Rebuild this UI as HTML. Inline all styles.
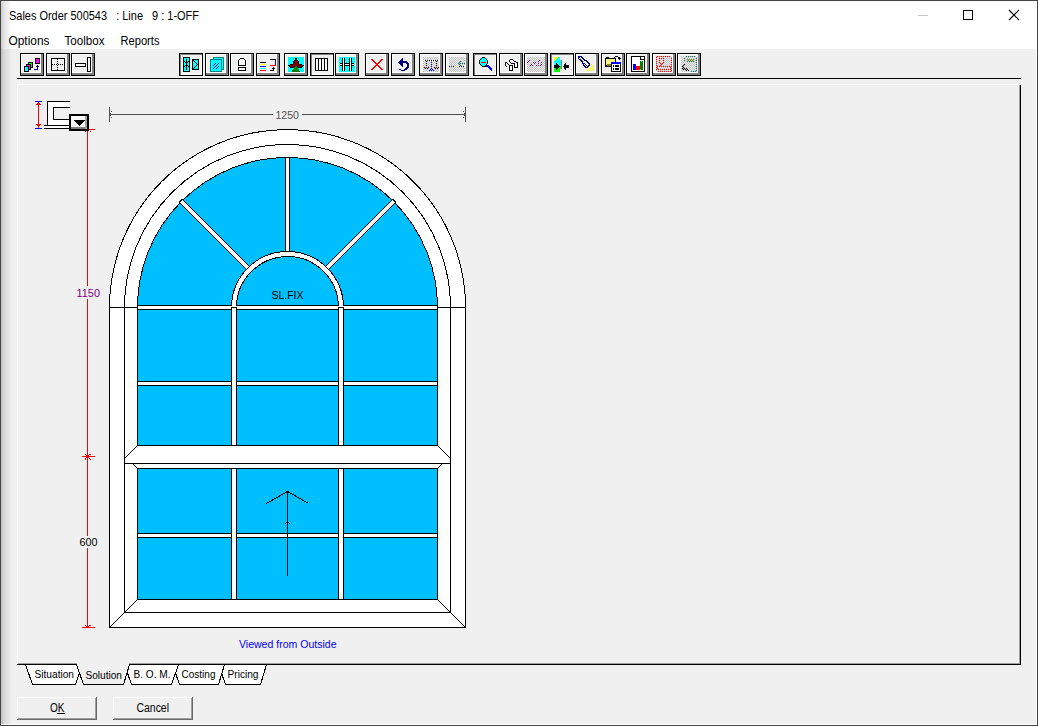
<!DOCTYPE html>
<html><head><meta charset="utf-8"><style>
html,body{margin:0;padding:0;width:1038px;height:726px;overflow:hidden;background:#f0f0f0}
svg{position:absolute;left:0;top:0;font-family:"Liberation Sans",sans-serif}
</style></head><body>
<svg width="1038" height="726" viewBox="0 0 1038 726" shape-rendering="crispEdges">
<rect x="0" y="0" width="1038" height="726" fill="#f0f0f0"/>
<rect x="0" y="0" width="1038" height="49" fill="#ffffff"/>
<defs><linearGradient id="lsh" x1="0" x2="1" y1="0" y2="0"><stop offset="0" stop-color="#000" stop-opacity="0.2"/><stop offset="0.3" stop-color="#000" stop-opacity="0.1"/><stop offset="1" stop-color="#000" stop-opacity="0"/></linearGradient></defs>
<rect x="1" y="0" width="11" height="726" fill="url(#lsh)"/>
<defs><filter id="crisp" x="-10%" y="-30%" width="120%" height="160%"><feComponentTransfer><feFuncA type="discrete" tableValues="0 1 1"/></feComponentTransfer></filter></defs>
<rect x="0" y="0" width="1038" height="1" fill="#444"/>
<rect x="0" y="0" width="1" height="726" fill="#444"/>
<rect x="1037" y="0" width="1" height="726" fill="#444"/>
<rect x="0" y="725" width="1038" height="1" fill="#444"/>
<rect x="1036" y="49" width="1" height="676" fill="#ffffff"/>
<rect x="1" y="724" width="1036" height="1" fill="#ffffff"/>
<text x="9" y="20" font-size="12" fill="#000" text-anchor="start" font-weight="normal" xml:space="preserve" style="white-space:pre" textLength="190" lengthAdjust="spacingAndGlyphs">Sales Order 500543   : Line   9 : 1-OFF</text>
<rect x="918" y="15" width="10" height="1" fill="#c8c8c8"/>
<rect x="963.5" y="10.5" width="9" height="9" fill="none" stroke="#000" stroke-width="1"/>
<g shape-rendering="geometricPrecision"><line x1="1009" y1="10" x2="1019" y2="20" stroke="#000" stroke-width="1.1"/><line x1="1019" y1="10" x2="1009" y2="20" stroke="#000" stroke-width="1.1"/></g>
<text x="8.5" y="45" font-size="12" fill="#000" text-anchor="start" font-weight="normal" xml:space="preserve" style="white-space:pre" textLength="41" lengthAdjust="spacingAndGlyphs">Options</text>
<text x="64.5" y="45" font-size="12" fill="#000" text-anchor="start" font-weight="normal" xml:space="preserve" style="white-space:pre" textLength="40" lengthAdjust="spacingAndGlyphs">Toolbox</text>
<text x="120.5" y="45" font-size="12" fill="#000" text-anchor="start" font-weight="normal" xml:space="preserve" style="white-space:pre" textLength="39" lengthAdjust="spacingAndGlyphs">Reports</text>
<rect x="20" y="53" width="24" height="23" fill="#000"/>
<rect x="21" y="54" width="22" height="21" fill="#f0f0f0"/>
<rect x="21" y="54" width="21" height="1" fill="#ffffff"/>
<rect x="21" y="54" width="1" height="20" fill="#ffffff"/>
<rect x="41" y="54" width="2" height="21" fill="#808080"/>
<rect x="21" y="73" width="22" height="2" fill="#808080"/>
<rect x="40" y="55" width="1" height="18" fill="#ffffff"/>
<rect x="22" y="72" width="19" height="1" fill="#ffffff"/>
<rect x="46" y="53" width="24" height="23" fill="#000"/>
<rect x="47" y="54" width="22" height="21" fill="#f0f0f0"/>
<rect x="47" y="54" width="21" height="1" fill="#ffffff"/>
<rect x="47" y="54" width="1" height="20" fill="#ffffff"/>
<rect x="67" y="54" width="2" height="21" fill="#808080"/>
<rect x="47" y="73" width="22" height="2" fill="#808080"/>
<rect x="66" y="55" width="1" height="18" fill="#ffffff"/>
<rect x="48" y="72" width="19" height="1" fill="#ffffff"/>
<rect x="71" y="53" width="24" height="23" fill="#000"/>
<rect x="72" y="54" width="22" height="21" fill="#f0f0f0"/>
<rect x="72" y="54" width="21" height="1" fill="#ffffff"/>
<rect x="72" y="54" width="1" height="20" fill="#ffffff"/>
<rect x="92" y="54" width="2" height="21" fill="#808080"/>
<rect x="72" y="73" width="22" height="2" fill="#808080"/>
<rect x="91" y="55" width="1" height="18" fill="#ffffff"/>
<rect x="73" y="72" width="19" height="1" fill="#ffffff"/>
<rect x="179" y="53" width="24" height="23" fill="#000"/>
<rect x="180" y="54" width="22" height="21" fill="#808080"/>
<rect x="181" y="55" width="21" height="20" fill="#ffffff"/>
<rect x="181" y="55" width="20" height="19" fill="#f0f0f0"/>
<rect x="205" y="53" width="24" height="23" fill="#000"/>
<rect x="206" y="54" width="22" height="21" fill="#f0f0f0"/>
<rect x="206" y="54" width="21" height="1" fill="#ffffff"/>
<rect x="206" y="54" width="1" height="20" fill="#ffffff"/>
<rect x="226" y="54" width="2" height="21" fill="#808080"/>
<rect x="206" y="73" width="22" height="2" fill="#808080"/>
<rect x="225" y="55" width="1" height="18" fill="#ffffff"/>
<rect x="207" y="72" width="19" height="1" fill="#ffffff"/>
<rect x="230" y="53" width="24" height="23" fill="#000"/>
<rect x="231" y="54" width="22" height="21" fill="#f0f0f0"/>
<rect x="231" y="54" width="21" height="1" fill="#ffffff"/>
<rect x="231" y="54" width="1" height="20" fill="#ffffff"/>
<rect x="251" y="54" width="2" height="21" fill="#808080"/>
<rect x="231" y="73" width="22" height="2" fill="#808080"/>
<rect x="250" y="55" width="1" height="18" fill="#ffffff"/>
<rect x="232" y="72" width="19" height="1" fill="#ffffff"/>
<rect x="256" y="53" width="24" height="23" fill="#000"/>
<rect x="257" y="54" width="22" height="21" fill="#f0f0f0"/>
<rect x="257" y="54" width="21" height="1" fill="#ffffff"/>
<rect x="257" y="54" width="1" height="20" fill="#ffffff"/>
<rect x="277" y="54" width="2" height="21" fill="#808080"/>
<rect x="257" y="73" width="22" height="2" fill="#808080"/>
<rect x="276" y="55" width="1" height="18" fill="#ffffff"/>
<rect x="258" y="72" width="19" height="1" fill="#ffffff"/>
<rect x="284" y="53" width="24" height="23" fill="#000"/>
<rect x="285" y="54" width="22" height="21" fill="#f0f0f0"/>
<rect x="285" y="54" width="21" height="1" fill="#ffffff"/>
<rect x="285" y="54" width="1" height="20" fill="#ffffff"/>
<rect x="305" y="54" width="2" height="21" fill="#808080"/>
<rect x="285" y="73" width="22" height="2" fill="#808080"/>
<rect x="304" y="55" width="1" height="18" fill="#ffffff"/>
<rect x="286" y="72" width="19" height="1" fill="#ffffff"/>
<rect x="310" y="53" width="24" height="23" fill="#000"/>
<rect x="311" y="54" width="22" height="21" fill="#808080"/>
<rect x="312" y="55" width="21" height="20" fill="#ffffff"/>
<rect x="312" y="55" width="20" height="19" fill="#f0f0f0"/>
<rect x="335" y="53" width="24" height="23" fill="#000"/>
<rect x="336" y="54" width="22" height="21" fill="#f0f0f0"/>
<rect x="336" y="54" width="21" height="1" fill="#ffffff"/>
<rect x="336" y="54" width="1" height="20" fill="#ffffff"/>
<rect x="356" y="54" width="2" height="21" fill="#808080"/>
<rect x="336" y="73" width="22" height="2" fill="#808080"/>
<rect x="355" y="55" width="1" height="18" fill="#ffffff"/>
<rect x="337" y="72" width="19" height="1" fill="#ffffff"/>
<rect x="365" y="53" width="24" height="23" fill="#000"/>
<rect x="366" y="54" width="22" height="21" fill="#f0f0f0"/>
<rect x="366" y="54" width="21" height="1" fill="#ffffff"/>
<rect x="366" y="54" width="1" height="20" fill="#ffffff"/>
<rect x="386" y="54" width="2" height="21" fill="#808080"/>
<rect x="366" y="73" width="22" height="2" fill="#808080"/>
<rect x="385" y="55" width="1" height="18" fill="#ffffff"/>
<rect x="367" y="72" width="19" height="1" fill="#ffffff"/>
<rect x="391" y="53" width="24" height="23" fill="#000"/>
<rect x="392" y="54" width="22" height="21" fill="#f0f0f0"/>
<rect x="392" y="54" width="21" height="1" fill="#ffffff"/>
<rect x="392" y="54" width="1" height="20" fill="#ffffff"/>
<rect x="412" y="54" width="2" height="21" fill="#808080"/>
<rect x="392" y="73" width="22" height="2" fill="#808080"/>
<rect x="411" y="55" width="1" height="18" fill="#ffffff"/>
<rect x="393" y="72" width="19" height="1" fill="#ffffff"/>
<rect x="419" y="53" width="24" height="23" fill="#000"/>
<rect x="420" y="54" width="22" height="21" fill="#f0f0f0"/>
<rect x="420" y="54" width="21" height="1" fill="#ffffff"/>
<rect x="420" y="54" width="1" height="20" fill="#ffffff"/>
<rect x="440" y="54" width="2" height="21" fill="#808080"/>
<rect x="420" y="73" width="22" height="2" fill="#808080"/>
<rect x="439" y="55" width="1" height="18" fill="#ffffff"/>
<rect x="421" y="72" width="19" height="1" fill="#ffffff"/>
<rect x="445" y="53" width="24" height="23" fill="#000"/>
<rect x="446" y="54" width="22" height="21" fill="#f0f0f0"/>
<rect x="446" y="54" width="21" height="1" fill="#ffffff"/>
<rect x="446" y="54" width="1" height="20" fill="#ffffff"/>
<rect x="466" y="54" width="2" height="21" fill="#808080"/>
<rect x="446" y="73" width="22" height="2" fill="#808080"/>
<rect x="465" y="55" width="1" height="18" fill="#ffffff"/>
<rect x="447" y="72" width="19" height="1" fill="#ffffff"/>
<rect x="473" y="53" width="24" height="23" fill="#000"/>
<rect x="474" y="54" width="22" height="21" fill="#808080"/>
<rect x="475" y="55" width="21" height="20" fill="#ffffff"/>
<rect x="475" y="55" width="20" height="19" fill="#f0f0f0"/>
<rect x="499" y="53" width="24" height="23" fill="#000"/>
<rect x="500" y="54" width="22" height="21" fill="#f0f0f0"/>
<rect x="500" y="54" width="21" height="1" fill="#ffffff"/>
<rect x="500" y="54" width="1" height="20" fill="#ffffff"/>
<rect x="520" y="54" width="2" height="21" fill="#808080"/>
<rect x="500" y="73" width="22" height="2" fill="#808080"/>
<rect x="519" y="55" width="1" height="18" fill="#ffffff"/>
<rect x="501" y="72" width="19" height="1" fill="#ffffff"/>
<rect x="524" y="53" width="24" height="23" fill="#000"/>
<rect x="525" y="54" width="22" height="21" fill="#f0f0f0"/>
<rect x="525" y="54" width="21" height="1" fill="#ffffff"/>
<rect x="525" y="54" width="1" height="20" fill="#ffffff"/>
<rect x="545" y="54" width="2" height="21" fill="#808080"/>
<rect x="525" y="73" width="22" height="2" fill="#808080"/>
<rect x="544" y="55" width="1" height="18" fill="#ffffff"/>
<rect x="526" y="72" width="19" height="1" fill="#ffffff"/>
<rect x="550" y="53" width="24" height="23" fill="#000"/>
<rect x="551" y="54" width="22" height="21" fill="#808080"/>
<rect x="552" y="55" width="21" height="20" fill="#ffffff"/>
<rect x="552" y="55" width="20" height="19" fill="#f0f0f0"/>
<rect x="575" y="53" width="24" height="23" fill="#000"/>
<rect x="576" y="54" width="22" height="21" fill="#f0f0f0"/>
<rect x="576" y="54" width="21" height="1" fill="#ffffff"/>
<rect x="576" y="54" width="1" height="20" fill="#ffffff"/>
<rect x="596" y="54" width="2" height="21" fill="#808080"/>
<rect x="576" y="73" width="22" height="2" fill="#808080"/>
<rect x="595" y="55" width="1" height="18" fill="#ffffff"/>
<rect x="577" y="72" width="19" height="1" fill="#ffffff"/>
<rect x="601" y="53" width="24" height="23" fill="#000"/>
<rect x="602" y="54" width="22" height="21" fill="#f0f0f0"/>
<rect x="602" y="54" width="21" height="1" fill="#ffffff"/>
<rect x="602" y="54" width="1" height="20" fill="#ffffff"/>
<rect x="622" y="54" width="2" height="21" fill="#808080"/>
<rect x="602" y="73" width="22" height="2" fill="#808080"/>
<rect x="621" y="55" width="1" height="18" fill="#ffffff"/>
<rect x="603" y="72" width="19" height="1" fill="#ffffff"/>
<rect x="626" y="53" width="24" height="23" fill="#000"/>
<rect x="627" y="54" width="22" height="21" fill="#f0f0f0"/>
<rect x="627" y="54" width="21" height="1" fill="#ffffff"/>
<rect x="627" y="54" width="1" height="20" fill="#ffffff"/>
<rect x="647" y="54" width="2" height="21" fill="#808080"/>
<rect x="627" y="73" width="22" height="2" fill="#808080"/>
<rect x="646" y="55" width="1" height="18" fill="#ffffff"/>
<rect x="628" y="72" width="19" height="1" fill="#ffffff"/>
<rect x="652" y="53" width="24" height="23" fill="#000"/>
<rect x="653" y="54" width="22" height="21" fill="#f0f0f0"/>
<rect x="653" y="54" width="21" height="1" fill="#ffffff"/>
<rect x="653" y="54" width="1" height="20" fill="#ffffff"/>
<rect x="673" y="54" width="2" height="21" fill="#808080"/>
<rect x="653" y="73" width="22" height="2" fill="#808080"/>
<rect x="672" y="55" width="1" height="18" fill="#ffffff"/>
<rect x="654" y="72" width="19" height="1" fill="#ffffff"/>
<rect x="677" y="53" width="24" height="23" fill="#000"/>
<rect x="678" y="54" width="22" height="21" fill="#f0f0f0"/>
<rect x="678" y="54" width="21" height="1" fill="#ffffff"/>
<rect x="678" y="54" width="1" height="20" fill="#ffffff"/>
<rect x="698" y="54" width="2" height="21" fill="#808080"/>
<rect x="678" y="73" width="22" height="2" fill="#808080"/>
<rect x="697" y="55" width="1" height="18" fill="#ffffff"/>
<rect x="679" y="72" width="19" height="1" fill="#ffffff"/>
<rect x="17" y="78" width="1004" height="1" fill="#000"/>
<rect x="35" y="58" width="5" height="6" fill="#000000"/>
<rect x="36" y="59" width="3" height="4" fill="#ff00ff"/>
<rect x="28" y="62" width="5" height="6" fill="#000000"/>
<rect x="29" y="63" width="3" height="4" fill="#00ff00"/>
<rect x="26" y="64" width="5" height="6" fill="#000000"/>
<rect x="27" y="65" width="3" height="4" fill="#ff00ff"/>
<rect x="24" y="66" width="5" height="6" fill="#000000"/>
<rect x="25" y="67" width="3" height="4" fill="#00ffff"/>
<rect x="34" y="69" width="4" height="1" fill="#000080"/>
<rect x="37" y="66" width="1" height="4" fill="#000080"/>
<rect x="36" y="66" width="3" height="1" fill="#000080"/>
<rect x="37" y="65" width="1" height="1" fill="#000080"/>
<rect x="51" y="58" width="14" height="13" fill="#000000"/>
<rect x="52" y="59" width="12" height="11" fill="#ffffff"/>
<rect x="53" y="60" width="10" height="9" fill="#f0f0f0"/>
<rect x="52" y="64" width="1" height="1" fill="#000000"/>
<rect x="54" y="64" width="1" height="1" fill="#000000"/>
<rect x="56" y="64" width="1" height="1" fill="#000000"/>
<rect x="58" y="64" width="1" height="1" fill="#000000"/>
<rect x="60" y="64" width="1" height="1" fill="#000000"/>
<rect x="62" y="64" width="1" height="1" fill="#000000"/>
<rect x="57" y="59" width="1" height="1" fill="#000000"/>
<rect x="57" y="61" width="1" height="1" fill="#000000"/>
<rect x="57" y="63" width="1" height="1" fill="#000000"/>
<rect x="57" y="65" width="1" height="1" fill="#000000"/>
<rect x="57" y="67" width="1" height="1" fill="#000000"/>
<rect x="57" y="69" width="1" height="1" fill="#000000"/>
<rect x="57" y="64" width="1" height="1" fill="#ffffff"/>
<rect x="75" y="63" width="11" height="4" fill="#000000"/>
<rect x="76" y="64" width="9" height="2" fill="#ffffff"/>
<rect x="87" y="57" width="4" height="15" fill="#000000"/>
<rect x="88" y="58" width="2" height="13" fill="#ffffff"/>
<rect x="183" y="57" width="7" height="15" fill="#000000"/>
<rect x="184" y="58" width="5" height="13" fill="#00ffff"/>
<rect x="186" y="59" width="1" height="11" fill="#000000"/>
<rect x="184" y="61" width="1" height="1" fill="#000000"/>
<rect x="188" y="61" width="1" height="1" fill="#000000"/>
<rect x="185" y="62" width="1" height="1" fill="#000000"/>
<rect x="187" y="62" width="1" height="1" fill="#000000"/>
<rect x="185" y="65" width="1" height="1" fill="#000000"/>
<rect x="187" y="65" width="1" height="1" fill="#000000"/>
<rect x="184" y="66" width="1" height="1" fill="#000000"/>
<rect x="188" y="66" width="1" height="1" fill="#000000"/>
<rect x="192" y="59" width="7" height="11" fill="#000000"/>
<rect x="193" y="60" width="5" height="9" fill="#00ffff"/>
<rect x="193" y="60" width="1" height="1" fill="#000000"/>
<rect x="194" y="61" width="1" height="1" fill="#000000"/>
<rect x="195" y="62" width="1" height="1" fill="#000000"/>
<rect x="196" y="63" width="1" height="1" fill="#000000"/>
<rect x="197" y="64" width="1" height="1" fill="#000000"/>
<rect x="196" y="65" width="1" height="1" fill="#000000"/>
<rect x="195" y="66" width="1" height="1" fill="#000000"/>
<rect x="194" y="67" width="1" height="1" fill="#000000"/>
<rect x="193" y="68" width="1" height="1" fill="#000000"/>
<rect x="213" y="57" width="11" height="13" fill="#008080"/>
<rect x="214" y="58" width="9" height="11" fill="#00ffff"/>
<rect x="210" y="59" width="12" height="13" fill="#008080"/>
<rect x="211" y="60" width="10" height="11" fill="#00ffff"/>
<rect x="213" y="65" width="1" height="1" fill="#0000ff"/>
<rect x="214" y="64" width="1" height="1" fill="#0000ff"/>
<rect x="215" y="63" width="1" height="1" fill="#0000ff"/>
<rect x="213" y="68" width="1" height="1" fill="#0000ff"/>
<rect x="214" y="67" width="1" height="1" fill="#0000ff"/>
<rect x="215" y="66" width="1" height="1" fill="#0000ff"/>
<rect x="216" y="65" width="1" height="1" fill="#0000ff"/>
<rect x="217" y="64" width="1" height="1" fill="#0000ff"/>
<rect x="218" y="63" width="1" height="1" fill="#0000ff"/>
<rect x="216" y="68" width="1" height="1" fill="#0000ff"/>
<rect x="217" y="67" width="1" height="1" fill="#0000ff"/>
<rect x="218" y="66" width="1" height="1" fill="#0000ff"/>
<rect x="237" y="57" width="10" height="15" fill="#ffffff"/>
<rect x="239" y="59" width="6" height="7" fill="#ffffff"/>
<rect x="240" y="58" width="4" height="1" fill="#000000"/>
<rect x="239" y="59" width="1" height="1" fill="#000000"/>
<rect x="244" y="59" width="1" height="1" fill="#000000"/>
<rect x="238" y="60" width="1" height="6" fill="#000000"/>
<rect x="245" y="60" width="1" height="6" fill="#000000"/>
<rect x="238" y="65" width="8" height="1" fill="#000000"/>
<rect x="240" y="59" width="4" height="1" fill="#ffffff"/>
<rect x="238" y="67" width="8" height="4" fill="#000000"/>
<rect x="239" y="68" width="6" height="2" fill="#ffffff"/>
<rect x="260" y="62" width="6" height="1" fill="#000000"/>
<rect x="260" y="64" width="6" height="1" fill="#ffff00"/>
<rect x="260" y="66" width="6" height="1" fill="#0000ff"/>
<rect x="260" y="68" width="6" height="1" fill="#00ffff"/>
<rect x="260" y="70" width="6" height="1" fill="#ff0000"/>
<rect x="270" y="59" width="6" height="1" fill="#000000"/>
<rect x="275" y="60" width="1" height="5" fill="#0000ff"/>
<rect x="270" y="65" width="6" height="1" fill="#ff0000"/>
<rect x="270" y="70" width="4" height="1" fill="#000000"/>
<rect x="273" y="67" width="1" height="3" fill="#000000"/>
<rect x="272" y="68" width="3" height="1" fill="#000000"/>
<rect x="288" y="57" width="16" height="15" fill="#00ffff"/>
<rect x="295" y="58" width="2" height="1" fill="#000000"/>
<rect x="295" y="59" width="2" height="1" fill="#000000"/>
<rect x="294" y="60" width="1" height="1" fill="#000000"/>
<rect x="295" y="60" width="2" height="1" fill="#800000"/>
<rect x="297" y="60" width="1" height="1" fill="#000000"/>
<rect x="293" y="61" width="1" height="1" fill="#000000"/>
<rect x="294" y="61" width="4" height="1" fill="#800000"/>
<rect x="298" y="61" width="1" height="1" fill="#000000"/>
<rect x="293" y="62" width="1" height="1" fill="#000000"/>
<rect x="294" y="62" width="4" height="1" fill="#800000"/>
<rect x="298" y="62" width="1" height="1" fill="#000000"/>
<rect x="293" y="63" width="1" height="1" fill="#000000"/>
<rect x="294" y="63" width="4" height="1" fill="#800000"/>
<rect x="298" y="63" width="1" height="1" fill="#000000"/>
<rect x="290" y="64" width="3" height="1" fill="#000000"/>
<rect x="293" y="64" width="5" height="1" fill="#800000"/>
<rect x="298" y="64" width="1" height="1" fill="#800000"/>
<rect x="299" y="64" width="3" height="1" fill="#000000"/>
<rect x="288" y="65" width="2" height="1" fill="#000000"/>
<rect x="290" y="65" width="8" height="1" fill="#800000"/>
<rect x="298" y="65" width="1" height="1" fill="#000000"/>
<rect x="299" y="65" width="3" height="1" fill="#800000"/>
<rect x="302" y="65" width="2" height="1" fill="#000000"/>
<rect x="289" y="66" width="1" height="1" fill="#000000"/>
<rect x="290" y="66" width="4" height="1" fill="#800000"/>
<rect x="294" y="66" width="1" height="1" fill="#000000"/>
<rect x="295" y="66" width="2" height="1" fill="#008000"/>
<rect x="297" y="66" width="1" height="1" fill="#000000"/>
<rect x="298" y="66" width="4" height="1" fill="#800000"/>
<rect x="302" y="66" width="1" height="1" fill="#000000"/>
<rect x="290" y="67" width="3" height="1" fill="#000000"/>
<rect x="293" y="67" width="1" height="1" fill="#000000"/>
<rect x="294" y="67" width="4" height="1" fill="#008000"/>
<rect x="298" y="67" width="1" height="1" fill="#000000"/>
<rect x="299" y="67" width="3" height="1" fill="#000000"/>
<rect x="294" y="68" width="4" height="1" fill="#008000"/>
<rect x="293" y="69" width="6" height="1" fill="#008000"/>
<rect x="292" y="70" width="7" height="1" fill="#008000"/>
<rect x="292" y="71" width="7" height="1" fill="#008000"/>
<rect x="299" y="71" width="1" height="1" fill="#000000"/>
<rect x="315" y="58" width="13" height="13" fill="#000000"/>
<rect x="316" y="59" width="11" height="11" fill="#ffffff"/>
<rect x="318" y="58" width="1" height="13" fill="#000000"/>
<rect x="321" y="58" width="1" height="13" fill="#000000"/>
<rect x="324" y="58" width="1" height="13" fill="#000000"/>
<rect x="339" y="57" width="16" height="15" fill="#00ffff"/>
<rect x="340" y="63" width="14" height="3" fill="#000000"/>
<rect x="340" y="64" width="14" height="1" fill="#ffffff"/>
<rect x="342" y="58" width="3" height="13" fill="#000000"/>
<rect x="343" y="58" width="1" height="13" fill="#ffffff"/>
<rect x="349" y="58" width="3" height="13" fill="#000000"/>
<rect x="350" y="58" width="1" height="13" fill="#ffffff"/>
<path d="M371 59 L373 59 L383 70 L381 70 Z M381 59 L383 59 L373 70 L371 70 Z" fill="#ff0000"/>
<rect x="402" y="58" width="1" height="1" fill="#000080"/>
<rect x="401" y="59" width="2" height="1" fill="#000080"/>
<rect x="400" y="60" width="3" height="1" fill="#000080"/>
<rect x="399" y="61" width="8" height="1" fill="#000080"/>
<rect x="398" y="62" width="10" height="1" fill="#000080"/>
<rect x="399" y="63" width="4" height="1" fill="#000080"/>
<rect x="406" y="63" width="3" height="1" fill="#000080"/>
<rect x="400" y="64" width="3" height="1" fill="#000080"/>
<rect x="407" y="64" width="2" height="1" fill="#000080"/>
<rect x="401" y="65" width="2" height="1" fill="#000080"/>
<rect x="407" y="65" width="2" height="1" fill="#000080"/>
<rect x="402" y="66" width="1" height="1" fill="#000080"/>
<rect x="407" y="66" width="2" height="1" fill="#000080"/>
<rect x="406" y="67" width="3" height="1" fill="#000080"/>
<rect x="405" y="68" width="3" height="1" fill="#000080"/>
<rect x="399" y="69" width="2" height="1" fill="#000080"/>
<rect x="404" y="69" width="3" height="1" fill="#000080"/>
<rect x="401" y="70" width="4" height="1" fill="#000080"/>
<rect x="423" y="57" width="1" height="1" fill="#c0c0c0"/>
<rect x="425" y="57" width="1" height="1" fill="#c0c0c0"/>
<rect x="427" y="57" width="1" height="1" fill="#c0c0c0"/>
<rect x="429" y="57" width="1" height="1" fill="#c0c0c0"/>
<rect x="431" y="57" width="1" height="1" fill="#c0c0c0"/>
<rect x="433" y="57" width="1" height="1" fill="#c0c0c0"/>
<rect x="435" y="57" width="1" height="1" fill="#c0c0c0"/>
<rect x="437" y="57" width="1" height="1" fill="#c0c0c0"/>
<rect x="424" y="58" width="1" height="1" fill="#c0c0c0"/>
<rect x="426" y="58" width="1" height="1" fill="#c0c0c0"/>
<rect x="428" y="58" width="1" height="1" fill="#c0c0c0"/>
<rect x="430" y="58" width="1" height="1" fill="#c0c0c0"/>
<rect x="432" y="58" width="1" height="1" fill="#c0c0c0"/>
<rect x="434" y="58" width="1" height="1" fill="#c0c0c0"/>
<rect x="436" y="58" width="1" height="1" fill="#c0c0c0"/>
<rect x="438" y="58" width="1" height="1" fill="#c0c0c0"/>
<rect x="423" y="59" width="1" height="1" fill="#c0c0c0"/>
<rect x="425" y="59" width="1" height="1" fill="#c0c0c0"/>
<rect x="427" y="59" width="1" height="1" fill="#c0c0c0"/>
<rect x="429" y="59" width="1" height="1" fill="#c0c0c0"/>
<rect x="431" y="59" width="1" height="1" fill="#c0c0c0"/>
<rect x="433" y="59" width="1" height="1" fill="#c0c0c0"/>
<rect x="435" y="59" width="1" height="1" fill="#c0c0c0"/>
<rect x="437" y="59" width="1" height="1" fill="#c0c0c0"/>
<rect x="424" y="60" width="1" height="1" fill="#c0c0c0"/>
<rect x="426" y="60" width="1" height="1" fill="#c0c0c0"/>
<rect x="428" y="60" width="1" height="1" fill="#c0c0c0"/>
<rect x="430" y="60" width="1" height="1" fill="#c0c0c0"/>
<rect x="432" y="60" width="1" height="1" fill="#c0c0c0"/>
<rect x="434" y="60" width="1" height="1" fill="#c0c0c0"/>
<rect x="436" y="60" width="1" height="1" fill="#c0c0c0"/>
<rect x="438" y="60" width="1" height="1" fill="#c0c0c0"/>
<rect x="423" y="61" width="1" height="1" fill="#c0c0c0"/>
<rect x="425" y="61" width="1" height="1" fill="#c0c0c0"/>
<rect x="427" y="61" width="1" height="1" fill="#c0c0c0"/>
<rect x="429" y="61" width="1" height="1" fill="#c0c0c0"/>
<rect x="431" y="61" width="1" height="1" fill="#c0c0c0"/>
<rect x="433" y="61" width="1" height="1" fill="#c0c0c0"/>
<rect x="435" y="61" width="1" height="1" fill="#c0c0c0"/>
<rect x="437" y="61" width="1" height="1" fill="#c0c0c0"/>
<rect x="424" y="62" width="1" height="1" fill="#c0c0c0"/>
<rect x="426" y="62" width="1" height="1" fill="#c0c0c0"/>
<rect x="428" y="62" width="1" height="1" fill="#c0c0c0"/>
<rect x="430" y="62" width="1" height="1" fill="#c0c0c0"/>
<rect x="432" y="62" width="1" height="1" fill="#c0c0c0"/>
<rect x="434" y="62" width="1" height="1" fill="#c0c0c0"/>
<rect x="436" y="62" width="1" height="1" fill="#c0c0c0"/>
<rect x="438" y="62" width="1" height="1" fill="#c0c0c0"/>
<rect x="423" y="63" width="1" height="1" fill="#c0c0c0"/>
<rect x="425" y="63" width="1" height="1" fill="#c0c0c0"/>
<rect x="427" y="63" width="1" height="1" fill="#c0c0c0"/>
<rect x="429" y="63" width="1" height="1" fill="#c0c0c0"/>
<rect x="431" y="63" width="1" height="1" fill="#c0c0c0"/>
<rect x="433" y="63" width="1" height="1" fill="#c0c0c0"/>
<rect x="435" y="63" width="1" height="1" fill="#c0c0c0"/>
<rect x="437" y="63" width="1" height="1" fill="#c0c0c0"/>
<rect x="424" y="64" width="1" height="1" fill="#c0c0c0"/>
<rect x="426" y="64" width="1" height="1" fill="#c0c0c0"/>
<rect x="428" y="64" width="1" height="1" fill="#c0c0c0"/>
<rect x="430" y="64" width="1" height="1" fill="#c0c0c0"/>
<rect x="432" y="64" width="1" height="1" fill="#c0c0c0"/>
<rect x="434" y="64" width="1" height="1" fill="#c0c0c0"/>
<rect x="436" y="64" width="1" height="1" fill="#c0c0c0"/>
<rect x="438" y="64" width="1" height="1" fill="#c0c0c0"/>
<rect x="423" y="65" width="1" height="1" fill="#c0c0c0"/>
<rect x="425" y="65" width="1" height="1" fill="#c0c0c0"/>
<rect x="427" y="65" width="1" height="1" fill="#c0c0c0"/>
<rect x="429" y="65" width="1" height="1" fill="#c0c0c0"/>
<rect x="431" y="65" width="1" height="1" fill="#c0c0c0"/>
<rect x="433" y="65" width="1" height="1" fill="#c0c0c0"/>
<rect x="435" y="65" width="1" height="1" fill="#c0c0c0"/>
<rect x="437" y="65" width="1" height="1" fill="#c0c0c0"/>
<rect x="424" y="66" width="1" height="1" fill="#c0c0c0"/>
<rect x="426" y="66" width="1" height="1" fill="#c0c0c0"/>
<rect x="428" y="66" width="1" height="1" fill="#c0c0c0"/>
<rect x="430" y="66" width="1" height="1" fill="#c0c0c0"/>
<rect x="432" y="66" width="1" height="1" fill="#c0c0c0"/>
<rect x="434" y="66" width="1" height="1" fill="#c0c0c0"/>
<rect x="436" y="66" width="1" height="1" fill="#c0c0c0"/>
<rect x="438" y="66" width="1" height="1" fill="#c0c0c0"/>
<rect x="423" y="67" width="1" height="1" fill="#c0c0c0"/>
<rect x="425" y="67" width="1" height="1" fill="#c0c0c0"/>
<rect x="427" y="67" width="1" height="1" fill="#c0c0c0"/>
<rect x="429" y="67" width="1" height="1" fill="#c0c0c0"/>
<rect x="431" y="67" width="1" height="1" fill="#c0c0c0"/>
<rect x="433" y="67" width="1" height="1" fill="#c0c0c0"/>
<rect x="435" y="67" width="1" height="1" fill="#c0c0c0"/>
<rect x="437" y="67" width="1" height="1" fill="#c0c0c0"/>
<rect x="424" y="68" width="1" height="1" fill="#c0c0c0"/>
<rect x="426" y="68" width="1" height="1" fill="#c0c0c0"/>
<rect x="428" y="68" width="1" height="1" fill="#c0c0c0"/>
<rect x="430" y="68" width="1" height="1" fill="#c0c0c0"/>
<rect x="432" y="68" width="1" height="1" fill="#c0c0c0"/>
<rect x="434" y="68" width="1" height="1" fill="#c0c0c0"/>
<rect x="436" y="68" width="1" height="1" fill="#c0c0c0"/>
<rect x="438" y="68" width="1" height="1" fill="#c0c0c0"/>
<rect x="423" y="69" width="1" height="1" fill="#c0c0c0"/>
<rect x="425" y="69" width="1" height="1" fill="#c0c0c0"/>
<rect x="427" y="69" width="1" height="1" fill="#c0c0c0"/>
<rect x="429" y="69" width="1" height="1" fill="#c0c0c0"/>
<rect x="431" y="69" width="1" height="1" fill="#c0c0c0"/>
<rect x="433" y="69" width="1" height="1" fill="#c0c0c0"/>
<rect x="435" y="69" width="1" height="1" fill="#c0c0c0"/>
<rect x="437" y="69" width="1" height="1" fill="#c0c0c0"/>
<rect x="424" y="70" width="1" height="1" fill="#c0c0c0"/>
<rect x="426" y="70" width="1" height="1" fill="#c0c0c0"/>
<rect x="428" y="70" width="1" height="1" fill="#c0c0c0"/>
<rect x="430" y="70" width="1" height="1" fill="#c0c0c0"/>
<rect x="432" y="70" width="1" height="1" fill="#c0c0c0"/>
<rect x="434" y="70" width="1" height="1" fill="#c0c0c0"/>
<rect x="436" y="70" width="1" height="1" fill="#c0c0c0"/>
<rect x="438" y="70" width="1" height="1" fill="#c0c0c0"/>
<rect x="423" y="71" width="1" height="1" fill="#c0c0c0"/>
<rect x="425" y="71" width="1" height="1" fill="#c0c0c0"/>
<rect x="427" y="71" width="1" height="1" fill="#c0c0c0"/>
<rect x="429" y="71" width="1" height="1" fill="#c0c0c0"/>
<rect x="431" y="71" width="1" height="1" fill="#c0c0c0"/>
<rect x="433" y="71" width="1" height="1" fill="#c0c0c0"/>
<rect x="435" y="71" width="1" height="1" fill="#c0c0c0"/>
<rect x="437" y="71" width="1" height="1" fill="#c0c0c0"/>
<rect x="423" y="60" width="16" height="1" fill="#f0f0f0"/>
<rect x="425" y="60" width="1" height="1" fill="#000000"/>
<rect x="427" y="60" width="1" height="1" fill="#000000"/>
<rect x="429" y="60" width="1" height="1" fill="#000000"/>
<rect x="431" y="60" width="1" height="1" fill="#000000"/>
<rect x="433" y="60" width="1" height="1" fill="#000000"/>
<rect x="435" y="60" width="1" height="1" fill="#000000"/>
<rect x="437" y="60" width="1" height="1" fill="#000000"/>
<rect x="426" y="61" width="1" height="1" fill="#000000"/>
<rect x="436" y="61" width="1" height="1" fill="#000000"/>
<rect x="426" y="63" width="1" height="1" fill="#000000"/>
<rect x="436" y="63" width="1" height="1" fill="#000000"/>
<rect x="426" y="65" width="1" height="1" fill="#000000"/>
<rect x="436" y="65" width="1" height="1" fill="#000000"/>
<rect x="424" y="67" width="1" height="1" fill="#000000"/>
<rect x="428" y="67" width="1" height="1" fill="#000000"/>
<rect x="434" y="67" width="1" height="1" fill="#000000"/>
<rect x="438" y="67" width="1" height="1" fill="#000000"/>
<rect x="425" y="68" width="1" height="1" fill="#000000"/>
<rect x="427" y="68" width="1" height="1" fill="#000000"/>
<rect x="435" y="68" width="1" height="1" fill="#000000"/>
<rect x="437" y="68" width="1" height="1" fill="#000000"/>
<rect x="426" y="67" width="1" height="1" fill="#ff0000"/>
<rect x="436" y="67" width="1" height="1" fill="#ff0000"/>
<rect x="431" y="62" width="1" height="1" fill="#0000ff"/>
<rect x="431" y="64" width="1" height="1" fill="#0000ff"/>
<rect x="431" y="66" width="1" height="1" fill="#0000ff"/>
<rect x="431" y="68" width="1" height="1" fill="#0000ff"/>
<rect x="430" y="69" width="1" height="1" fill="#0000ff"/>
<rect x="432" y="69" width="1" height="1" fill="#0000ff"/>
<rect x="429" y="70" width="1" height="1" fill="#0000ff"/>
<rect x="431" y="70" width="1" height="1" fill="#0000ff"/>
<rect x="433" y="70" width="1" height="1" fill="#0000ff"/>
<rect x="449" y="57" width="1" height="1" fill="#c0c0c0"/>
<rect x="451" y="57" width="1" height="1" fill="#c0c0c0"/>
<rect x="453" y="57" width="1" height="1" fill="#c0c0c0"/>
<rect x="455" y="57" width="1" height="1" fill="#c0c0c0"/>
<rect x="457" y="57" width="1" height="1" fill="#c0c0c0"/>
<rect x="459" y="57" width="1" height="1" fill="#c0c0c0"/>
<rect x="461" y="57" width="1" height="1" fill="#c0c0c0"/>
<rect x="463" y="57" width="1" height="1" fill="#c0c0c0"/>
<rect x="450" y="58" width="1" height="1" fill="#c0c0c0"/>
<rect x="452" y="58" width="1" height="1" fill="#c0c0c0"/>
<rect x="454" y="58" width="1" height="1" fill="#c0c0c0"/>
<rect x="456" y="58" width="1" height="1" fill="#c0c0c0"/>
<rect x="458" y="58" width="1" height="1" fill="#c0c0c0"/>
<rect x="460" y="58" width="1" height="1" fill="#c0c0c0"/>
<rect x="462" y="58" width="1" height="1" fill="#c0c0c0"/>
<rect x="464" y="58" width="1" height="1" fill="#c0c0c0"/>
<rect x="449" y="59" width="1" height="1" fill="#c0c0c0"/>
<rect x="451" y="59" width="1" height="1" fill="#c0c0c0"/>
<rect x="453" y="59" width="1" height="1" fill="#c0c0c0"/>
<rect x="455" y="59" width="1" height="1" fill="#c0c0c0"/>
<rect x="457" y="59" width="1" height="1" fill="#c0c0c0"/>
<rect x="459" y="59" width="1" height="1" fill="#c0c0c0"/>
<rect x="461" y="59" width="1" height="1" fill="#c0c0c0"/>
<rect x="463" y="59" width="1" height="1" fill="#c0c0c0"/>
<rect x="450" y="60" width="1" height="1" fill="#c0c0c0"/>
<rect x="452" y="60" width="1" height="1" fill="#c0c0c0"/>
<rect x="454" y="60" width="1" height="1" fill="#c0c0c0"/>
<rect x="456" y="60" width="1" height="1" fill="#c0c0c0"/>
<rect x="458" y="60" width="1" height="1" fill="#c0c0c0"/>
<rect x="460" y="60" width="1" height="1" fill="#c0c0c0"/>
<rect x="462" y="60" width="1" height="1" fill="#c0c0c0"/>
<rect x="464" y="60" width="1" height="1" fill="#c0c0c0"/>
<rect x="449" y="61" width="1" height="1" fill="#c0c0c0"/>
<rect x="451" y="61" width="1" height="1" fill="#c0c0c0"/>
<rect x="453" y="61" width="1" height="1" fill="#c0c0c0"/>
<rect x="455" y="61" width="1" height="1" fill="#c0c0c0"/>
<rect x="457" y="61" width="1" height="1" fill="#c0c0c0"/>
<rect x="459" y="61" width="1" height="1" fill="#c0c0c0"/>
<rect x="461" y="61" width="1" height="1" fill="#c0c0c0"/>
<rect x="463" y="61" width="1" height="1" fill="#c0c0c0"/>
<rect x="450" y="62" width="1" height="1" fill="#c0c0c0"/>
<rect x="452" y="62" width="1" height="1" fill="#c0c0c0"/>
<rect x="454" y="62" width="1" height="1" fill="#c0c0c0"/>
<rect x="456" y="62" width="1" height="1" fill="#c0c0c0"/>
<rect x="458" y="62" width="1" height="1" fill="#c0c0c0"/>
<rect x="460" y="62" width="1" height="1" fill="#c0c0c0"/>
<rect x="462" y="62" width="1" height="1" fill="#c0c0c0"/>
<rect x="464" y="62" width="1" height="1" fill="#c0c0c0"/>
<rect x="449" y="63" width="1" height="1" fill="#c0c0c0"/>
<rect x="451" y="63" width="1" height="1" fill="#c0c0c0"/>
<rect x="453" y="63" width="1" height="1" fill="#c0c0c0"/>
<rect x="455" y="63" width="1" height="1" fill="#c0c0c0"/>
<rect x="457" y="63" width="1" height="1" fill="#c0c0c0"/>
<rect x="459" y="63" width="1" height="1" fill="#c0c0c0"/>
<rect x="461" y="63" width="1" height="1" fill="#c0c0c0"/>
<rect x="463" y="63" width="1" height="1" fill="#c0c0c0"/>
<rect x="450" y="64" width="1" height="1" fill="#c0c0c0"/>
<rect x="452" y="64" width="1" height="1" fill="#c0c0c0"/>
<rect x="454" y="64" width="1" height="1" fill="#c0c0c0"/>
<rect x="456" y="64" width="1" height="1" fill="#c0c0c0"/>
<rect x="458" y="64" width="1" height="1" fill="#c0c0c0"/>
<rect x="460" y="64" width="1" height="1" fill="#c0c0c0"/>
<rect x="462" y="64" width="1" height="1" fill="#c0c0c0"/>
<rect x="464" y="64" width="1" height="1" fill="#c0c0c0"/>
<rect x="449" y="65" width="1" height="1" fill="#c0c0c0"/>
<rect x="451" y="65" width="1" height="1" fill="#c0c0c0"/>
<rect x="453" y="65" width="1" height="1" fill="#c0c0c0"/>
<rect x="455" y="65" width="1" height="1" fill="#c0c0c0"/>
<rect x="457" y="65" width="1" height="1" fill="#c0c0c0"/>
<rect x="459" y="65" width="1" height="1" fill="#c0c0c0"/>
<rect x="461" y="65" width="1" height="1" fill="#c0c0c0"/>
<rect x="463" y="65" width="1" height="1" fill="#c0c0c0"/>
<rect x="450" y="66" width="1" height="1" fill="#c0c0c0"/>
<rect x="452" y="66" width="1" height="1" fill="#c0c0c0"/>
<rect x="454" y="66" width="1" height="1" fill="#c0c0c0"/>
<rect x="456" y="66" width="1" height="1" fill="#c0c0c0"/>
<rect x="458" y="66" width="1" height="1" fill="#c0c0c0"/>
<rect x="460" y="66" width="1" height="1" fill="#c0c0c0"/>
<rect x="462" y="66" width="1" height="1" fill="#c0c0c0"/>
<rect x="464" y="66" width="1" height="1" fill="#c0c0c0"/>
<rect x="449" y="67" width="1" height="1" fill="#c0c0c0"/>
<rect x="451" y="67" width="1" height="1" fill="#c0c0c0"/>
<rect x="453" y="67" width="1" height="1" fill="#c0c0c0"/>
<rect x="455" y="67" width="1" height="1" fill="#c0c0c0"/>
<rect x="457" y="67" width="1" height="1" fill="#c0c0c0"/>
<rect x="459" y="67" width="1" height="1" fill="#c0c0c0"/>
<rect x="461" y="67" width="1" height="1" fill="#c0c0c0"/>
<rect x="463" y="67" width="1" height="1" fill="#c0c0c0"/>
<rect x="450" y="68" width="1" height="1" fill="#c0c0c0"/>
<rect x="452" y="68" width="1" height="1" fill="#c0c0c0"/>
<rect x="454" y="68" width="1" height="1" fill="#c0c0c0"/>
<rect x="456" y="68" width="1" height="1" fill="#c0c0c0"/>
<rect x="458" y="68" width="1" height="1" fill="#c0c0c0"/>
<rect x="460" y="68" width="1" height="1" fill="#c0c0c0"/>
<rect x="462" y="68" width="1" height="1" fill="#c0c0c0"/>
<rect x="464" y="68" width="1" height="1" fill="#c0c0c0"/>
<rect x="449" y="69" width="1" height="1" fill="#c0c0c0"/>
<rect x="451" y="69" width="1" height="1" fill="#c0c0c0"/>
<rect x="453" y="69" width="1" height="1" fill="#c0c0c0"/>
<rect x="455" y="69" width="1" height="1" fill="#c0c0c0"/>
<rect x="457" y="69" width="1" height="1" fill="#c0c0c0"/>
<rect x="459" y="69" width="1" height="1" fill="#c0c0c0"/>
<rect x="461" y="69" width="1" height="1" fill="#c0c0c0"/>
<rect x="463" y="69" width="1" height="1" fill="#c0c0c0"/>
<rect x="450" y="70" width="1" height="1" fill="#c0c0c0"/>
<rect x="452" y="70" width="1" height="1" fill="#c0c0c0"/>
<rect x="454" y="70" width="1" height="1" fill="#c0c0c0"/>
<rect x="456" y="70" width="1" height="1" fill="#c0c0c0"/>
<rect x="458" y="70" width="1" height="1" fill="#c0c0c0"/>
<rect x="460" y="70" width="1" height="1" fill="#c0c0c0"/>
<rect x="462" y="70" width="1" height="1" fill="#c0c0c0"/>
<rect x="464" y="70" width="1" height="1" fill="#c0c0c0"/>
<rect x="449" y="71" width="1" height="1" fill="#c0c0c0"/>
<rect x="451" y="71" width="1" height="1" fill="#c0c0c0"/>
<rect x="453" y="71" width="1" height="1" fill="#c0c0c0"/>
<rect x="455" y="71" width="1" height="1" fill="#c0c0c0"/>
<rect x="457" y="71" width="1" height="1" fill="#c0c0c0"/>
<rect x="459" y="71" width="1" height="1" fill="#c0c0c0"/>
<rect x="461" y="71" width="1" height="1" fill="#c0c0c0"/>
<rect x="463" y="71" width="1" height="1" fill="#c0c0c0"/>
<rect x="449" y="66" width="16" height="1" fill="#f0f0f0"/>
<rect x="460" y="61" width="1" height="1" fill="#008080"/>
<rect x="459" y="62" width="1" height="1" fill="#008080"/>
<rect x="458" y="63" width="1" height="1" fill="#008080"/>
<rect x="460" y="63" width="1" height="1" fill="#008080"/>
<rect x="462" y="63" width="1" height="1" fill="#008080"/>
<rect x="464" y="63" width="1" height="1" fill="#008080"/>
<rect x="459" y="64" width="1" height="1" fill="#008080"/>
<rect x="460" y="65" width="1" height="1" fill="#008080"/>
<rect x="449" y="66" width="1" height="1" fill="#0000ff"/>
<rect x="451" y="66" width="1" height="1" fill="#0000ff"/>
<rect x="453" y="66" width="1" height="1" fill="#0000ff"/>
<rect x="459" y="66" width="1" height="1" fill="#0000ff"/>
<rect x="461" y="66" width="1" height="1" fill="#0000ff"/>
<rect x="463" y="66" width="1" height="1" fill="#0000ff"/>
<rect x="455" y="66" width="1" height="1" fill="#ffff00"/>
<rect x="457" y="66" width="1" height="1" fill="#ffff00"/>
<rect x="480" y="58" width="7" height="8" fill="#00ffff"/>
<rect x="479" y="60" width="9" height="4" fill="#00ffff"/>
<rect x="482" y="57" width="3" height="1" fill="#000000"/>
<rect x="481" y="58" width="1" height="1" fill="#000000"/>
<rect x="485" y="58" width="1" height="1" fill="#000000"/>
<rect x="480" y="59" width="1" height="1" fill="#000000"/>
<rect x="486" y="59" width="1" height="1" fill="#000000"/>
<rect x="479" y="60" width="1" height="4" fill="#000000"/>
<rect x="487" y="60" width="1" height="4" fill="#000000"/>
<rect x="480" y="64" width="1" height="1" fill="#000000"/>
<rect x="486" y="64" width="1" height="1" fill="#000000"/>
<rect x="481" y="65" width="1" height="1" fill="#000000"/>
<rect x="485" y="65" width="2" height="1" fill="#000000"/>
<rect x="482" y="66" width="5" height="1" fill="#000000"/>
<rect x="481" y="59" width="5" height="1" fill="#00ffff"/>
<rect x="481" y="62" width="5" height="1" fill="#ff0000"/>
<rect x="487" y="65" width="2" height="1" fill="#0000ff"/>
<rect x="487" y="66" width="3" height="1" fill="#0000ff"/>
<rect x="488" y="67" width="3" height="1" fill="#0000ff"/>
<rect x="489" y="68" width="3" height="1" fill="#0000ff"/>
<rect x="490" y="69" width="2" height="1" fill="#0000ff"/>
<rect x="491" y="70" width="1" height="1" fill="#0000ff"/>
<rect x="510" y="60" width="3" height="2" fill="#ffffff"/>
<rect x="515" y="63" width="2" height="4" fill="#ffffff"/>
<rect x="510" y="66" width="2" height="4" fill="#ffffff"/>
<rect x="510" y="59" width="1" height="1" fill="#000000"/>
<rect x="511" y="59" width="1" height="1" fill="#000000"/>
<rect x="512" y="59" width="1" height="1" fill="#000000"/>
<rect x="509" y="60" width="1" height="1" fill="#000000"/>
<rect x="513" y="60" width="1" height="1" fill="#000000"/>
<rect x="509" y="61" width="1" height="1" fill="#000000"/>
<rect x="514" y="61" width="1" height="1" fill="#000000"/>
<rect x="515" y="61" width="1" height="1" fill="#000000"/>
<rect x="505" y="62" width="1" height="1" fill="#000000"/>
<rect x="506" y="62" width="1" height="1" fill="#000000"/>
<rect x="510" y="62" width="1" height="1" fill="#000000"/>
<rect x="516" y="62" width="1" height="1" fill="#000000"/>
<rect x="517" y="62" width="1" height="1" fill="#000000"/>
<rect x="505" y="63" width="1" height="1" fill="#000000"/>
<rect x="507" y="63" width="1" height="1" fill="#000000"/>
<rect x="511" y="63" width="1" height="1" fill="#000000"/>
<rect x="512" y="63" width="1" height="1" fill="#000000"/>
<rect x="513" y="63" width="1" height="1" fill="#000000"/>
<rect x="514" y="63" width="1" height="1" fill="#000000"/>
<rect x="517" y="63" width="1" height="1" fill="#000000"/>
<rect x="505" y="64" width="1" height="1" fill="#000000"/>
<rect x="508" y="64" width="1" height="1" fill="#000000"/>
<rect x="514" y="64" width="1" height="1" fill="#000000"/>
<rect x="517" y="64" width="1" height="1" fill="#000000"/>
<rect x="505" y="65" width="1" height="1" fill="#000000"/>
<rect x="509" y="65" width="1" height="1" fill="#000000"/>
<rect x="510" y="65" width="1" height="1" fill="#000000"/>
<rect x="511" y="65" width="1" height="1" fill="#000000"/>
<rect x="512" y="65" width="1" height="1" fill="#000000"/>
<rect x="514" y="65" width="1" height="1" fill="#000000"/>
<rect x="517" y="65" width="1" height="1" fill="#000000"/>
<rect x="506" y="66" width="1" height="1" fill="#000000"/>
<rect x="509" y="66" width="1" height="1" fill="#000000"/>
<rect x="512" y="66" width="1" height="1" fill="#000000"/>
<rect x="514" y="66" width="1" height="1" fill="#000000"/>
<rect x="517" y="66" width="1" height="1" fill="#000000"/>
<rect x="509" y="67" width="1" height="1" fill="#000000"/>
<rect x="512" y="67" width="1" height="1" fill="#000000"/>
<rect x="514" y="67" width="1" height="1" fill="#000000"/>
<rect x="515" y="67" width="1" height="1" fill="#000000"/>
<rect x="516" y="67" width="1" height="1" fill="#000000"/>
<rect x="517" y="67" width="1" height="1" fill="#000000"/>
<rect x="509" y="68" width="1" height="1" fill="#000000"/>
<rect x="512" y="68" width="1" height="1" fill="#000000"/>
<rect x="509" y="69" width="1" height="1" fill="#000000"/>
<rect x="512" y="69" width="1" height="1" fill="#000000"/>
<rect x="509" y="70" width="1" height="1" fill="#000000"/>
<rect x="510" y="70" width="1" height="1" fill="#000000"/>
<rect x="511" y="70" width="1" height="1" fill="#000000"/>
<rect x="512" y="70" width="1" height="1" fill="#000000"/>
<rect x="528" y="57" width="1" height="1" fill="#c0c0c0"/>
<rect x="530" y="57" width="1" height="1" fill="#c0c0c0"/>
<rect x="532" y="57" width="1" height="1" fill="#c0c0c0"/>
<rect x="534" y="57" width="1" height="1" fill="#c0c0c0"/>
<rect x="536" y="57" width="1" height="1" fill="#c0c0c0"/>
<rect x="538" y="57" width="1" height="1" fill="#c0c0c0"/>
<rect x="540" y="57" width="1" height="1" fill="#c0c0c0"/>
<rect x="542" y="57" width="1" height="1" fill="#c0c0c0"/>
<rect x="544" y="57" width="1" height="1" fill="#c0c0c0"/>
<rect x="527" y="58" width="1" height="1" fill="#c0c0c0"/>
<rect x="529" y="58" width="1" height="1" fill="#c0c0c0"/>
<rect x="531" y="58" width="1" height="1" fill="#c0c0c0"/>
<rect x="533" y="58" width="1" height="1" fill="#c0c0c0"/>
<rect x="535" y="58" width="1" height="1" fill="#c0c0c0"/>
<rect x="537" y="58" width="1" height="1" fill="#c0c0c0"/>
<rect x="539" y="58" width="1" height="1" fill="#c0c0c0"/>
<rect x="541" y="58" width="1" height="1" fill="#c0c0c0"/>
<rect x="543" y="58" width="1" height="1" fill="#c0c0c0"/>
<rect x="528" y="59" width="1" height="1" fill="#c0c0c0"/>
<rect x="530" y="59" width="1" height="1" fill="#c0c0c0"/>
<rect x="532" y="59" width="1" height="1" fill="#c0c0c0"/>
<rect x="534" y="59" width="1" height="1" fill="#c0c0c0"/>
<rect x="536" y="59" width="1" height="1" fill="#c0c0c0"/>
<rect x="538" y="59" width="1" height="1" fill="#c0c0c0"/>
<rect x="540" y="59" width="1" height="1" fill="#c0c0c0"/>
<rect x="542" y="59" width="1" height="1" fill="#c0c0c0"/>
<rect x="544" y="59" width="1" height="1" fill="#c0c0c0"/>
<rect x="527" y="60" width="1" height="1" fill="#c0c0c0"/>
<rect x="529" y="60" width="1" height="1" fill="#c0c0c0"/>
<rect x="531" y="60" width="1" height="1" fill="#c0c0c0"/>
<rect x="533" y="60" width="1" height="1" fill="#c0c0c0"/>
<rect x="535" y="60" width="1" height="1" fill="#c0c0c0"/>
<rect x="537" y="60" width="1" height="1" fill="#c0c0c0"/>
<rect x="539" y="60" width="1" height="1" fill="#c0c0c0"/>
<rect x="541" y="60" width="1" height="1" fill="#c0c0c0"/>
<rect x="543" y="60" width="1" height="1" fill="#c0c0c0"/>
<rect x="528" y="61" width="1" height="1" fill="#c0c0c0"/>
<rect x="530" y="61" width="1" height="1" fill="#c0c0c0"/>
<rect x="532" y="61" width="1" height="1" fill="#c0c0c0"/>
<rect x="534" y="61" width="1" height="1" fill="#c0c0c0"/>
<rect x="536" y="61" width="1" height="1" fill="#c0c0c0"/>
<rect x="538" y="61" width="1" height="1" fill="#c0c0c0"/>
<rect x="540" y="61" width="1" height="1" fill="#c0c0c0"/>
<rect x="542" y="61" width="1" height="1" fill="#c0c0c0"/>
<rect x="544" y="61" width="1" height="1" fill="#c0c0c0"/>
<rect x="527" y="62" width="1" height="1" fill="#c0c0c0"/>
<rect x="529" y="62" width="1" height="1" fill="#c0c0c0"/>
<rect x="531" y="62" width="1" height="1" fill="#c0c0c0"/>
<rect x="533" y="62" width="1" height="1" fill="#c0c0c0"/>
<rect x="535" y="62" width="1" height="1" fill="#c0c0c0"/>
<rect x="537" y="62" width="1" height="1" fill="#c0c0c0"/>
<rect x="539" y="62" width="1" height="1" fill="#c0c0c0"/>
<rect x="541" y="62" width="1" height="1" fill="#c0c0c0"/>
<rect x="543" y="62" width="1" height="1" fill="#c0c0c0"/>
<rect x="528" y="63" width="1" height="1" fill="#c0c0c0"/>
<rect x="530" y="63" width="1" height="1" fill="#c0c0c0"/>
<rect x="532" y="63" width="1" height="1" fill="#c0c0c0"/>
<rect x="534" y="63" width="1" height="1" fill="#c0c0c0"/>
<rect x="536" y="63" width="1" height="1" fill="#c0c0c0"/>
<rect x="538" y="63" width="1" height="1" fill="#c0c0c0"/>
<rect x="540" y="63" width="1" height="1" fill="#c0c0c0"/>
<rect x="542" y="63" width="1" height="1" fill="#c0c0c0"/>
<rect x="544" y="63" width="1" height="1" fill="#c0c0c0"/>
<rect x="527" y="64" width="1" height="1" fill="#c0c0c0"/>
<rect x="529" y="64" width="1" height="1" fill="#c0c0c0"/>
<rect x="531" y="64" width="1" height="1" fill="#c0c0c0"/>
<rect x="533" y="64" width="1" height="1" fill="#c0c0c0"/>
<rect x="535" y="64" width="1" height="1" fill="#c0c0c0"/>
<rect x="537" y="64" width="1" height="1" fill="#c0c0c0"/>
<rect x="539" y="64" width="1" height="1" fill="#c0c0c0"/>
<rect x="541" y="64" width="1" height="1" fill="#c0c0c0"/>
<rect x="543" y="64" width="1" height="1" fill="#c0c0c0"/>
<rect x="528" y="65" width="1" height="1" fill="#c0c0c0"/>
<rect x="530" y="65" width="1" height="1" fill="#c0c0c0"/>
<rect x="532" y="65" width="1" height="1" fill="#c0c0c0"/>
<rect x="534" y="65" width="1" height="1" fill="#c0c0c0"/>
<rect x="536" y="65" width="1" height="1" fill="#c0c0c0"/>
<rect x="538" y="65" width="1" height="1" fill="#c0c0c0"/>
<rect x="540" y="65" width="1" height="1" fill="#c0c0c0"/>
<rect x="542" y="65" width="1" height="1" fill="#c0c0c0"/>
<rect x="544" y="65" width="1" height="1" fill="#c0c0c0"/>
<rect x="527" y="66" width="1" height="1" fill="#c0c0c0"/>
<rect x="529" y="66" width="1" height="1" fill="#c0c0c0"/>
<rect x="531" y="66" width="1" height="1" fill="#c0c0c0"/>
<rect x="533" y="66" width="1" height="1" fill="#c0c0c0"/>
<rect x="535" y="66" width="1" height="1" fill="#c0c0c0"/>
<rect x="537" y="66" width="1" height="1" fill="#c0c0c0"/>
<rect x="539" y="66" width="1" height="1" fill="#c0c0c0"/>
<rect x="541" y="66" width="1" height="1" fill="#c0c0c0"/>
<rect x="543" y="66" width="1" height="1" fill="#c0c0c0"/>
<rect x="528" y="67" width="1" height="1" fill="#c0c0c0"/>
<rect x="530" y="67" width="1" height="1" fill="#c0c0c0"/>
<rect x="532" y="67" width="1" height="1" fill="#c0c0c0"/>
<rect x="534" y="67" width="1" height="1" fill="#c0c0c0"/>
<rect x="536" y="67" width="1" height="1" fill="#c0c0c0"/>
<rect x="538" y="67" width="1" height="1" fill="#c0c0c0"/>
<rect x="540" y="67" width="1" height="1" fill="#c0c0c0"/>
<rect x="542" y="67" width="1" height="1" fill="#c0c0c0"/>
<rect x="544" y="67" width="1" height="1" fill="#c0c0c0"/>
<rect x="527" y="68" width="1" height="1" fill="#c0c0c0"/>
<rect x="529" y="68" width="1" height="1" fill="#c0c0c0"/>
<rect x="531" y="68" width="1" height="1" fill="#c0c0c0"/>
<rect x="533" y="68" width="1" height="1" fill="#c0c0c0"/>
<rect x="535" y="68" width="1" height="1" fill="#c0c0c0"/>
<rect x="537" y="68" width="1" height="1" fill="#c0c0c0"/>
<rect x="539" y="68" width="1" height="1" fill="#c0c0c0"/>
<rect x="541" y="68" width="1" height="1" fill="#c0c0c0"/>
<rect x="543" y="68" width="1" height="1" fill="#c0c0c0"/>
<rect x="528" y="69" width="1" height="1" fill="#c0c0c0"/>
<rect x="530" y="69" width="1" height="1" fill="#c0c0c0"/>
<rect x="532" y="69" width="1" height="1" fill="#c0c0c0"/>
<rect x="534" y="69" width="1" height="1" fill="#c0c0c0"/>
<rect x="536" y="69" width="1" height="1" fill="#c0c0c0"/>
<rect x="538" y="69" width="1" height="1" fill="#c0c0c0"/>
<rect x="540" y="69" width="1" height="1" fill="#c0c0c0"/>
<rect x="542" y="69" width="1" height="1" fill="#c0c0c0"/>
<rect x="544" y="69" width="1" height="1" fill="#c0c0c0"/>
<rect x="527" y="70" width="1" height="1" fill="#c0c0c0"/>
<rect x="529" y="70" width="1" height="1" fill="#c0c0c0"/>
<rect x="531" y="70" width="1" height="1" fill="#c0c0c0"/>
<rect x="533" y="70" width="1" height="1" fill="#c0c0c0"/>
<rect x="535" y="70" width="1" height="1" fill="#c0c0c0"/>
<rect x="537" y="70" width="1" height="1" fill="#c0c0c0"/>
<rect x="539" y="70" width="1" height="1" fill="#c0c0c0"/>
<rect x="541" y="70" width="1" height="1" fill="#c0c0c0"/>
<rect x="543" y="70" width="1" height="1" fill="#c0c0c0"/>
<rect x="528" y="71" width="1" height="1" fill="#c0c0c0"/>
<rect x="530" y="71" width="1" height="1" fill="#c0c0c0"/>
<rect x="532" y="71" width="1" height="1" fill="#c0c0c0"/>
<rect x="534" y="71" width="1" height="1" fill="#c0c0c0"/>
<rect x="536" y="71" width="1" height="1" fill="#c0c0c0"/>
<rect x="538" y="71" width="1" height="1" fill="#c0c0c0"/>
<rect x="540" y="71" width="1" height="1" fill="#c0c0c0"/>
<rect x="542" y="71" width="1" height="1" fill="#c0c0c0"/>
<rect x="544" y="71" width="1" height="1" fill="#c0c0c0"/>
<rect x="529" y="60" width="1" height="1" fill="#800080"/>
<rect x="528" y="61" width="1" height="1" fill="#800080"/>
<rect x="527" y="62" width="1" height="1" fill="#800080"/>
<rect x="531" y="64" width="1" height="1" fill="#800080"/>
<rect x="530" y="65" width="1" height="1" fill="#800080"/>
<rect x="532" y="65" width="1" height="1" fill="#800080"/>
<rect x="533" y="62" width="1" height="1" fill="#800080"/>
<rect x="535" y="62" width="1" height="1" fill="#800080"/>
<rect x="534" y="63" width="1" height="1" fill="#800080"/>
<rect x="536" y="65" width="1" height="1" fill="#800080"/>
<rect x="538" y="65" width="1" height="1" fill="#800080"/>
<rect x="538" y="63" width="1" height="1" fill="#800080"/>
<rect x="538" y="61" width="1" height="1" fill="#800080"/>
<rect x="539" y="60" width="1" height="1" fill="#800080"/>
<rect x="541" y="62" width="1" height="1" fill="#800080"/>
<rect x="541" y="64" width="1" height="1" fill="#800080"/>
<rect x="540" y="65" width="1" height="1" fill="#800080"/>
<rect x="554" y="57" width="6" height="9" fill="#00ffff"/>
<rect x="560" y="60" width="1" height="6" fill="#00ffff"/>
<rect x="554" y="66" width="6" height="6" fill="#00ff00"/>
<rect x="560" y="66" width="1" height="3" fill="#00ff00"/>
<rect x="560" y="57" width="1" height="3" fill="#ffffff"/>
<rect x="560" y="69" width="1" height="3" fill="#ffffff"/>
<rect x="554" y="57" width="4" height="1" fill="#ffff00"/>
<rect x="554" y="58" width="3" height="1" fill="#ffff00"/>
<rect x="554" y="59" width="2" height="1" fill="#ffff00"/>
<rect x="554" y="60" width="1" height="1" fill="#ffff00"/>
<rect x="561" y="60" width="1" height="9" fill="#808080"/>
<rect x="554" y="65" width="5" height="3" fill="#000000"/>
<rect x="556" y="63" width="1" height="7" fill="#000000"/>
<rect x="557" y="64" width="1" height="5" fill="#000000"/>
<rect x="559" y="66" width="1" height="1" fill="#000000"/>
<rect x="565" y="65" width="4" height="3" fill="#000000"/>
<rect x="565" y="63" width="1" height="7" fill="#000000"/>
<rect x="564" y="64" width="1" height="5" fill="#000000"/>
<rect x="563" y="66" width="1" height="1" fill="#000000"/>
<path transform="translate(575,53)" d="M4 4 L6 4 L11 8 L12 8 L15 11 L15 13 L12 14 L10 14 L8 12 L8 11 L4 6 Z" fill="#fff"/>
<rect x="578" y="56" width="1" height="1" fill="#000080"/>
<rect x="579" y="56" width="1" height="1" fill="#000080"/>
<rect x="580" y="56" width="1" height="1" fill="#000080"/>
<rect x="581" y="56" width="1" height="1" fill="#000080"/>
<rect x="578" y="57" width="1" height="1" fill="#000080"/>
<rect x="579" y="57" width="1" height="1" fill="#000080"/>
<rect x="581" y="57" width="1" height="1" fill="#000080"/>
<rect x="582" y="57" width="1" height="1" fill="#000080"/>
<rect x="578" y="58" width="1" height="1" fill="#000080"/>
<rect x="582" y="58" width="1" height="1" fill="#000080"/>
<rect x="583" y="58" width="1" height="1" fill="#000080"/>
<rect x="579" y="59" width="1" height="1" fill="#000080"/>
<rect x="580" y="59" width="1" height="1" fill="#000080"/>
<rect x="583" y="59" width="1" height="1" fill="#000080"/>
<rect x="584" y="59" width="1" height="1" fill="#000080"/>
<rect x="580" y="60" width="1" height="1" fill="#000080"/>
<rect x="581" y="60" width="1" height="1" fill="#000080"/>
<rect x="584" y="60" width="1" height="1" fill="#000080"/>
<rect x="585" y="60" width="1" height="1" fill="#000080"/>
<rect x="586" y="60" width="1" height="1" fill="#000080"/>
<rect x="581" y="61" width="1" height="1" fill="#000080"/>
<rect x="582" y="61" width="1" height="1" fill="#000080"/>
<rect x="586" y="61" width="1" height="1" fill="#000080"/>
<rect x="587" y="61" width="1" height="1" fill="#000080"/>
<rect x="582" y="62" width="1" height="1" fill="#000080"/>
<rect x="587" y="62" width="1" height="1" fill="#000080"/>
<rect x="588" y="62" width="1" height="1" fill="#000080"/>
<rect x="582" y="63" width="1" height="1" fill="#000080"/>
<rect x="583" y="63" width="1" height="1" fill="#000080"/>
<rect x="584" y="63" width="1" height="1" fill="#000080"/>
<rect x="588" y="63" width="1" height="1" fill="#000080"/>
<rect x="589" y="63" width="1" height="1" fill="#000080"/>
<rect x="583" y="64" width="1" height="1" fill="#000080"/>
<rect x="585" y="64" width="1" height="1" fill="#000080"/>
<rect x="589" y="64" width="1" height="1" fill="#000080"/>
<rect x="583" y="65" width="1" height="1" fill="#000080"/>
<rect x="584" y="65" width="1" height="1" fill="#000080"/>
<rect x="586" y="65" width="1" height="1" fill="#000080"/>
<rect x="588" y="65" width="1" height="1" fill="#000080"/>
<rect x="589" y="65" width="1" height="1" fill="#000080"/>
<rect x="584" y="66" width="1" height="1" fill="#000080"/>
<rect x="585" y="66" width="1" height="1" fill="#000080"/>
<rect x="587" y="66" width="1" height="1" fill="#000080"/>
<rect x="588" y="66" width="1" height="1" fill="#000080"/>
<rect x="585" y="67" width="1" height="1" fill="#000080"/>
<rect x="586" y="67" width="1" height="1" fill="#000080"/>
<rect x="587" y="67" width="1" height="1" fill="#000080"/>
<rect x="580" y="58" width="1" height="1" fill="#b0b090"/>
<rect x="581" y="59" width="1" height="1" fill="#b0b090"/>
<rect x="582" y="60" width="1" height="1" fill="#b0b090"/>
<rect x="583" y="61" width="1" height="1" fill="#b0b090"/>
<rect x="591" y="64" width="1" height="1" fill="#ffff00"/>
<rect x="592" y="65" width="1" height="1" fill="#ffff00"/>
<rect x="591" y="66" width="1" height="1" fill="#ffff00"/>
<rect x="593" y="66" width="1" height="1" fill="#ffff00"/>
<rect x="590" y="67" width="1" height="1" fill="#ffff00"/>
<rect x="592" y="67" width="1" height="1" fill="#ffff00"/>
<rect x="589" y="68" width="1" height="1" fill="#ffff00"/>
<rect x="591" y="68" width="1" height="1" fill="#ffff00"/>
<rect x="593" y="68" width="1" height="1" fill="#ffff00"/>
<rect x="586" y="69" width="1" height="1" fill="#ffff00"/>
<rect x="588" y="69" width="1" height="1" fill="#ffff00"/>
<rect x="590" y="69" width="1" height="1" fill="#ffff00"/>
<rect x="592" y="69" width="1" height="1" fill="#ffff00"/>
<rect x="587" y="70" width="1" height="1" fill="#ffff00"/>
<rect x="589" y="70" width="1" height="1" fill="#ffff00"/>
<rect x="591" y="70" width="1" height="1" fill="#ffff00"/>
<rect x="593" y="70" width="1" height="1" fill="#ffff00"/>
<rect x="605" y="58" width="11" height="9" fill="#000000"/>
<rect x="606" y="57" width="3" height="1" fill="#000000"/>
<rect x="606" y="59" width="1" height="1" fill="#ffffff"/>
<rect x="607" y="59" width="1" height="1" fill="#ffff00"/>
<rect x="608" y="59" width="1" height="1" fill="#ffffff"/>
<rect x="609" y="59" width="1" height="1" fill="#ffff00"/>
<rect x="610" y="59" width="1" height="1" fill="#ffffff"/>
<rect x="611" y="59" width="1" height="1" fill="#ffff00"/>
<rect x="612" y="59" width="1" height="1" fill="#ffffff"/>
<rect x="613" y="59" width="1" height="1" fill="#ffff00"/>
<rect x="614" y="59" width="1" height="1" fill="#ffffff"/>
<rect x="606" y="60" width="1" height="1" fill="#ffff00"/>
<rect x="607" y="60" width="1" height="1" fill="#ffffff"/>
<rect x="608" y="60" width="1" height="1" fill="#ffff00"/>
<rect x="609" y="60" width="1" height="1" fill="#ffffff"/>
<rect x="610" y="60" width="1" height="1" fill="#ffff00"/>
<rect x="611" y="60" width="1" height="1" fill="#ffffff"/>
<rect x="612" y="60" width="1" height="1" fill="#ffff00"/>
<rect x="613" y="60" width="1" height="1" fill="#ffffff"/>
<rect x="614" y="60" width="1" height="1" fill="#ffff00"/>
<rect x="606" y="61" width="1" height="1" fill="#ffffff"/>
<rect x="607" y="61" width="1" height="1" fill="#ffff00"/>
<rect x="608" y="61" width="1" height="1" fill="#ffffff"/>
<rect x="609" y="61" width="1" height="1" fill="#ffff00"/>
<rect x="610" y="61" width="1" height="1" fill="#ffffff"/>
<rect x="611" y="61" width="1" height="1" fill="#ffff00"/>
<rect x="612" y="61" width="1" height="1" fill="#ffffff"/>
<rect x="613" y="61" width="1" height="1" fill="#ffff00"/>
<rect x="614" y="61" width="1" height="1" fill="#ffffff"/>
<rect x="606" y="62" width="1" height="1" fill="#ffff00"/>
<rect x="607" y="62" width="1" height="1" fill="#ffffff"/>
<rect x="608" y="62" width="1" height="1" fill="#ffff00"/>
<rect x="609" y="62" width="1" height="1" fill="#ffffff"/>
<rect x="610" y="62" width="1" height="1" fill="#ffff00"/>
<rect x="611" y="62" width="1" height="1" fill="#ffffff"/>
<rect x="612" y="62" width="1" height="1" fill="#ffff00"/>
<rect x="613" y="62" width="1" height="1" fill="#ffffff"/>
<rect x="614" y="62" width="1" height="1" fill="#ffff00"/>
<rect x="606" y="63" width="1" height="1" fill="#ffffff"/>
<rect x="607" y="63" width="1" height="1" fill="#ffff00"/>
<rect x="608" y="63" width="1" height="1" fill="#ffffff"/>
<rect x="609" y="63" width="1" height="1" fill="#ffff00"/>
<rect x="610" y="63" width="1" height="1" fill="#ffffff"/>
<rect x="611" y="63" width="1" height="1" fill="#ffff00"/>
<rect x="612" y="63" width="1" height="1" fill="#ffffff"/>
<rect x="613" y="63" width="1" height="1" fill="#ffff00"/>
<rect x="614" y="63" width="1" height="1" fill="#ffffff"/>
<rect x="606" y="64" width="1" height="1" fill="#ffff00"/>
<rect x="607" y="64" width="1" height="1" fill="#ffffff"/>
<rect x="608" y="64" width="1" height="1" fill="#ffff00"/>
<rect x="609" y="64" width="1" height="1" fill="#ffffff"/>
<rect x="610" y="64" width="1" height="1" fill="#ffff00"/>
<rect x="611" y="64" width="1" height="1" fill="#ffffff"/>
<rect x="612" y="64" width="1" height="1" fill="#ffff00"/>
<rect x="613" y="64" width="1" height="1" fill="#ffffff"/>
<rect x="614" y="64" width="1" height="1" fill="#ffff00"/>
<rect x="607" y="64" width="4" height="2" fill="#808000"/>
<rect x="611" y="62" width="10" height="10" fill="#000000"/>
<rect x="612" y="63" width="8" height="8" fill="#ffffff"/>
<rect x="611" y="62" width="10" height="2" fill="#0000ff"/>
<rect x="613" y="65" width="1" height="2" fill="#000000"/>
<rect x="613" y="68" width="1" height="2" fill="#000000"/>
<rect x="615" y="65" width="4" height="2" fill="#000000"/>
<rect x="615" y="68" width="4" height="2" fill="#000000"/>
<rect x="615" y="56" width="3" height="1" fill="#000000"/>
<rect x="614" y="57" width="1" height="1" fill="#000000"/>
<rect x="618" y="57" width="1" height="1" fill="#000000"/>
<rect x="618" y="58" width="3" height="1" fill="#000000"/>
<rect x="619" y="57" width="1" height="3" fill="#000000"/>
<rect x="631" y="56" width="14" height="16" fill="#000000"/>
<rect x="632" y="57" width="12" height="14" fill="#ffffff"/>
<rect x="640" y="57" width="1" height="2" fill="#000000"/>
<rect x="640" y="59" width="4" height="1" fill="#000000"/>
<rect x="633" y="64" width="3" height="6" fill="#0000ff"/>
<rect x="636" y="66" width="4" height="4" fill="#ff0000"/>
<rect x="640" y="61" width="3" height="9" fill="#008000"/>
<rect x="641" y="61" width="1" height="1" fill="#00ff00"/>
<rect x="640" y="69" width="1" height="1" fill="#00ff00"/>
<rect x="656" y="56" width="1" height="1" fill="#c0c0c0"/>
<rect x="658" y="56" width="1" height="1" fill="#c0c0c0"/>
<rect x="660" y="56" width="1" height="1" fill="#c0c0c0"/>
<rect x="662" y="56" width="1" height="1" fill="#c0c0c0"/>
<rect x="664" y="56" width="1" height="1" fill="#c0c0c0"/>
<rect x="666" y="56" width="1" height="1" fill="#c0c0c0"/>
<rect x="668" y="56" width="1" height="1" fill="#c0c0c0"/>
<rect x="670" y="56" width="1" height="1" fill="#c0c0c0"/>
<rect x="657" y="57" width="1" height="1" fill="#c0c0c0"/>
<rect x="659" y="57" width="1" height="1" fill="#c0c0c0"/>
<rect x="661" y="57" width="1" height="1" fill="#c0c0c0"/>
<rect x="663" y="57" width="1" height="1" fill="#c0c0c0"/>
<rect x="665" y="57" width="1" height="1" fill="#c0c0c0"/>
<rect x="667" y="57" width="1" height="1" fill="#c0c0c0"/>
<rect x="669" y="57" width="1" height="1" fill="#c0c0c0"/>
<rect x="671" y="57" width="1" height="1" fill="#c0c0c0"/>
<rect x="656" y="58" width="1" height="1" fill="#c0c0c0"/>
<rect x="658" y="58" width="1" height="1" fill="#c0c0c0"/>
<rect x="660" y="58" width="1" height="1" fill="#c0c0c0"/>
<rect x="662" y="58" width="1" height="1" fill="#c0c0c0"/>
<rect x="664" y="58" width="1" height="1" fill="#c0c0c0"/>
<rect x="666" y="58" width="1" height="1" fill="#c0c0c0"/>
<rect x="668" y="58" width="1" height="1" fill="#c0c0c0"/>
<rect x="670" y="58" width="1" height="1" fill="#c0c0c0"/>
<rect x="657" y="59" width="1" height="1" fill="#c0c0c0"/>
<rect x="659" y="59" width="1" height="1" fill="#c0c0c0"/>
<rect x="661" y="59" width="1" height="1" fill="#c0c0c0"/>
<rect x="663" y="59" width="1" height="1" fill="#c0c0c0"/>
<rect x="665" y="59" width="1" height="1" fill="#c0c0c0"/>
<rect x="667" y="59" width="1" height="1" fill="#c0c0c0"/>
<rect x="669" y="59" width="1" height="1" fill="#c0c0c0"/>
<rect x="671" y="59" width="1" height="1" fill="#c0c0c0"/>
<rect x="656" y="60" width="1" height="1" fill="#c0c0c0"/>
<rect x="658" y="60" width="1" height="1" fill="#c0c0c0"/>
<rect x="660" y="60" width="1" height="1" fill="#c0c0c0"/>
<rect x="662" y="60" width="1" height="1" fill="#c0c0c0"/>
<rect x="664" y="60" width="1" height="1" fill="#c0c0c0"/>
<rect x="666" y="60" width="1" height="1" fill="#c0c0c0"/>
<rect x="668" y="60" width="1" height="1" fill="#c0c0c0"/>
<rect x="670" y="60" width="1" height="1" fill="#c0c0c0"/>
<rect x="657" y="61" width="1" height="1" fill="#c0c0c0"/>
<rect x="659" y="61" width="1" height="1" fill="#c0c0c0"/>
<rect x="661" y="61" width="1" height="1" fill="#c0c0c0"/>
<rect x="663" y="61" width="1" height="1" fill="#c0c0c0"/>
<rect x="665" y="61" width="1" height="1" fill="#c0c0c0"/>
<rect x="667" y="61" width="1" height="1" fill="#c0c0c0"/>
<rect x="669" y="61" width="1" height="1" fill="#c0c0c0"/>
<rect x="671" y="61" width="1" height="1" fill="#c0c0c0"/>
<rect x="656" y="62" width="1" height="1" fill="#c0c0c0"/>
<rect x="658" y="62" width="1" height="1" fill="#c0c0c0"/>
<rect x="660" y="62" width="1" height="1" fill="#c0c0c0"/>
<rect x="662" y="62" width="1" height="1" fill="#c0c0c0"/>
<rect x="664" y="62" width="1" height="1" fill="#c0c0c0"/>
<rect x="666" y="62" width="1" height="1" fill="#c0c0c0"/>
<rect x="668" y="62" width="1" height="1" fill="#c0c0c0"/>
<rect x="670" y="62" width="1" height="1" fill="#c0c0c0"/>
<rect x="657" y="63" width="1" height="1" fill="#c0c0c0"/>
<rect x="659" y="63" width="1" height="1" fill="#c0c0c0"/>
<rect x="661" y="63" width="1" height="1" fill="#c0c0c0"/>
<rect x="663" y="63" width="1" height="1" fill="#c0c0c0"/>
<rect x="665" y="63" width="1" height="1" fill="#c0c0c0"/>
<rect x="667" y="63" width="1" height="1" fill="#c0c0c0"/>
<rect x="669" y="63" width="1" height="1" fill="#c0c0c0"/>
<rect x="671" y="63" width="1" height="1" fill="#c0c0c0"/>
<rect x="656" y="64" width="1" height="1" fill="#c0c0c0"/>
<rect x="658" y="64" width="1" height="1" fill="#c0c0c0"/>
<rect x="660" y="64" width="1" height="1" fill="#c0c0c0"/>
<rect x="662" y="64" width="1" height="1" fill="#c0c0c0"/>
<rect x="664" y="64" width="1" height="1" fill="#c0c0c0"/>
<rect x="666" y="64" width="1" height="1" fill="#c0c0c0"/>
<rect x="668" y="64" width="1" height="1" fill="#c0c0c0"/>
<rect x="670" y="64" width="1" height="1" fill="#c0c0c0"/>
<rect x="657" y="65" width="1" height="1" fill="#c0c0c0"/>
<rect x="659" y="65" width="1" height="1" fill="#c0c0c0"/>
<rect x="661" y="65" width="1" height="1" fill="#c0c0c0"/>
<rect x="663" y="65" width="1" height="1" fill="#c0c0c0"/>
<rect x="665" y="65" width="1" height="1" fill="#c0c0c0"/>
<rect x="667" y="65" width="1" height="1" fill="#c0c0c0"/>
<rect x="669" y="65" width="1" height="1" fill="#c0c0c0"/>
<rect x="671" y="65" width="1" height="1" fill="#c0c0c0"/>
<rect x="656" y="66" width="1" height="1" fill="#c0c0c0"/>
<rect x="658" y="66" width="1" height="1" fill="#c0c0c0"/>
<rect x="660" y="66" width="1" height="1" fill="#c0c0c0"/>
<rect x="662" y="66" width="1" height="1" fill="#c0c0c0"/>
<rect x="664" y="66" width="1" height="1" fill="#c0c0c0"/>
<rect x="666" y="66" width="1" height="1" fill="#c0c0c0"/>
<rect x="668" y="66" width="1" height="1" fill="#c0c0c0"/>
<rect x="670" y="66" width="1" height="1" fill="#c0c0c0"/>
<rect x="657" y="67" width="1" height="1" fill="#c0c0c0"/>
<rect x="659" y="67" width="1" height="1" fill="#c0c0c0"/>
<rect x="661" y="67" width="1" height="1" fill="#c0c0c0"/>
<rect x="663" y="67" width="1" height="1" fill="#c0c0c0"/>
<rect x="665" y="67" width="1" height="1" fill="#c0c0c0"/>
<rect x="667" y="67" width="1" height="1" fill="#c0c0c0"/>
<rect x="669" y="67" width="1" height="1" fill="#c0c0c0"/>
<rect x="671" y="67" width="1" height="1" fill="#c0c0c0"/>
<rect x="656" y="68" width="1" height="1" fill="#c0c0c0"/>
<rect x="658" y="68" width="1" height="1" fill="#c0c0c0"/>
<rect x="660" y="68" width="1" height="1" fill="#c0c0c0"/>
<rect x="662" y="68" width="1" height="1" fill="#c0c0c0"/>
<rect x="664" y="68" width="1" height="1" fill="#c0c0c0"/>
<rect x="666" y="68" width="1" height="1" fill="#c0c0c0"/>
<rect x="668" y="68" width="1" height="1" fill="#c0c0c0"/>
<rect x="670" y="68" width="1" height="1" fill="#c0c0c0"/>
<rect x="657" y="69" width="1" height="1" fill="#c0c0c0"/>
<rect x="659" y="69" width="1" height="1" fill="#c0c0c0"/>
<rect x="661" y="69" width="1" height="1" fill="#c0c0c0"/>
<rect x="663" y="69" width="1" height="1" fill="#c0c0c0"/>
<rect x="665" y="69" width="1" height="1" fill="#c0c0c0"/>
<rect x="667" y="69" width="1" height="1" fill="#c0c0c0"/>
<rect x="669" y="69" width="1" height="1" fill="#c0c0c0"/>
<rect x="671" y="69" width="1" height="1" fill="#c0c0c0"/>
<rect x="656" y="70" width="1" height="1" fill="#c0c0c0"/>
<rect x="658" y="70" width="1" height="1" fill="#c0c0c0"/>
<rect x="660" y="70" width="1" height="1" fill="#c0c0c0"/>
<rect x="662" y="70" width="1" height="1" fill="#c0c0c0"/>
<rect x="664" y="70" width="1" height="1" fill="#c0c0c0"/>
<rect x="666" y="70" width="1" height="1" fill="#c0c0c0"/>
<rect x="668" y="70" width="1" height="1" fill="#c0c0c0"/>
<rect x="670" y="70" width="1" height="1" fill="#c0c0c0"/>
<rect x="657" y="71" width="1" height="1" fill="#c0c0c0"/>
<rect x="659" y="71" width="1" height="1" fill="#c0c0c0"/>
<rect x="661" y="71" width="1" height="1" fill="#c0c0c0"/>
<rect x="663" y="71" width="1" height="1" fill="#c0c0c0"/>
<rect x="665" y="71" width="1" height="1" fill="#c0c0c0"/>
<rect x="667" y="71" width="1" height="1" fill="#c0c0c0"/>
<rect x="669" y="71" width="1" height="1" fill="#c0c0c0"/>
<rect x="671" y="71" width="1" height="1" fill="#c0c0c0"/>
<rect x="657" y="56" width="1" height="1" fill="#ff0000"/>
<rect x="659" y="56" width="1" height="1" fill="#ff0000"/>
<rect x="661" y="56" width="1" height="1" fill="#ff0000"/>
<rect x="663" y="56" width="1" height="1" fill="#ff0000"/>
<rect x="665" y="56" width="1" height="1" fill="#ff0000"/>
<rect x="667" y="56" width="1" height="1" fill="#ff0000"/>
<rect x="669" y="56" width="1" height="1" fill="#ff0000"/>
<rect x="656" y="57" width="1" height="1" fill="#ff0000"/>
<rect x="659" y="58" width="1" height="1" fill="#ff0000"/>
<rect x="661" y="58" width="1" height="1" fill="#ff0000"/>
<rect x="663" y="58" width="1" height="1" fill="#ff0000"/>
<rect x="671" y="58" width="1" height="1" fill="#ff0000"/>
<rect x="656" y="59" width="1" height="1" fill="#ff0000"/>
<rect x="671" y="60" width="1" height="1" fill="#ff0000"/>
<rect x="659" y="60" width="1" height="1" fill="#ff0000"/>
<rect x="663" y="60" width="1" height="1" fill="#ff0000"/>
<rect x="656" y="61" width="1" height="1" fill="#ff0000"/>
<rect x="659" y="62" width="1" height="1" fill="#ff0000"/>
<rect x="663" y="62" width="1" height="1" fill="#ff0000"/>
<rect x="671" y="62" width="1" height="1" fill="#ff0000"/>
<rect x="656" y="63" width="1" height="1" fill="#ff0000"/>
<rect x="660" y="63" width="1" height="1" fill="#ff0000"/>
<rect x="662" y="63" width="1" height="1" fill="#ff0000"/>
<rect x="661" y="64" width="1" height="1" fill="#ff0000"/>
<rect x="671" y="64" width="1" height="1" fill="#ff0000"/>
<rect x="656" y="65" width="1" height="1" fill="#ff0000"/>
<rect x="660" y="65" width="1" height="1" fill="#ff0000"/>
<rect x="657" y="66" width="1" height="1" fill="#ff0000"/>
<rect x="659" y="66" width="1" height="1" fill="#ff0000"/>
<rect x="661" y="66" width="1" height="1" fill="#ff0000"/>
<rect x="663" y="66" width="1" height="1" fill="#ff0000"/>
<rect x="665" y="66" width="1" height="1" fill="#ff0000"/>
<rect x="667" y="66" width="1" height="1" fill="#ff0000"/>
<rect x="669" y="66" width="1" height="1" fill="#ff0000"/>
<rect x="671" y="66" width="1" height="1" fill="#ff0000"/>
<rect x="656" y="67" width="1" height="1" fill="#ff0000"/>
<rect x="670" y="67" width="1" height="1" fill="#ff0000"/>
<rect x="657" y="68" width="1" height="1" fill="#ff0000"/>
<rect x="671" y="68" width="1" height="1" fill="#ff0000"/>
<rect x="656" y="69" width="1" height="1" fill="#ff0000"/>
<rect x="658" y="69" width="1" height="1" fill="#ff0000"/>
<rect x="660" y="69" width="1" height="1" fill="#ff0000"/>
<rect x="662" y="69" width="1" height="1" fill="#ff0000"/>
<rect x="664" y="69" width="1" height="1" fill="#ff0000"/>
<rect x="666" y="69" width="1" height="1" fill="#ff0000"/>
<rect x="668" y="69" width="1" height="1" fill="#ff0000"/>
<rect x="670" y="69" width="1" height="1" fill="#ff0000"/>
<rect x="671" y="70" width="1" height="1" fill="#ff0000"/>
<rect x="658" y="71" width="1" height="1" fill="#ff0000"/>
<rect x="660" y="71" width="1" height="1" fill="#ff0000"/>
<rect x="662" y="71" width="1" height="1" fill="#ff0000"/>
<rect x="664" y="71" width="1" height="1" fill="#ff0000"/>
<rect x="666" y="71" width="1" height="1" fill="#ff0000"/>
<rect x="668" y="71" width="1" height="1" fill="#ff0000"/>
<rect x="670" y="71" width="1" height="1" fill="#ff0000"/>
<rect x="681" y="56" width="1" height="1" fill="#c0c0c0"/>
<rect x="683" y="56" width="1" height="1" fill="#c0c0c0"/>
<rect x="685" y="56" width="1" height="1" fill="#c0c0c0"/>
<rect x="687" y="56" width="1" height="1" fill="#c0c0c0"/>
<rect x="689" y="56" width="1" height="1" fill="#c0c0c0"/>
<rect x="691" y="56" width="1" height="1" fill="#c0c0c0"/>
<rect x="693" y="56" width="1" height="1" fill="#c0c0c0"/>
<rect x="695" y="56" width="1" height="1" fill="#c0c0c0"/>
<rect x="682" y="57" width="1" height="1" fill="#c0c0c0"/>
<rect x="684" y="57" width="1" height="1" fill="#c0c0c0"/>
<rect x="686" y="57" width="1" height="1" fill="#c0c0c0"/>
<rect x="688" y="57" width="1" height="1" fill="#c0c0c0"/>
<rect x="690" y="57" width="1" height="1" fill="#c0c0c0"/>
<rect x="692" y="57" width="1" height="1" fill="#c0c0c0"/>
<rect x="694" y="57" width="1" height="1" fill="#c0c0c0"/>
<rect x="696" y="57" width="1" height="1" fill="#c0c0c0"/>
<rect x="681" y="58" width="1" height="1" fill="#c0c0c0"/>
<rect x="683" y="58" width="1" height="1" fill="#c0c0c0"/>
<rect x="685" y="58" width="1" height="1" fill="#c0c0c0"/>
<rect x="687" y="58" width="1" height="1" fill="#c0c0c0"/>
<rect x="689" y="58" width="1" height="1" fill="#c0c0c0"/>
<rect x="691" y="58" width="1" height="1" fill="#c0c0c0"/>
<rect x="693" y="58" width="1" height="1" fill="#c0c0c0"/>
<rect x="695" y="58" width="1" height="1" fill="#c0c0c0"/>
<rect x="682" y="59" width="1" height="1" fill="#c0c0c0"/>
<rect x="684" y="59" width="1" height="1" fill="#c0c0c0"/>
<rect x="686" y="59" width="1" height="1" fill="#c0c0c0"/>
<rect x="688" y="59" width="1" height="1" fill="#c0c0c0"/>
<rect x="690" y="59" width="1" height="1" fill="#c0c0c0"/>
<rect x="692" y="59" width="1" height="1" fill="#c0c0c0"/>
<rect x="694" y="59" width="1" height="1" fill="#c0c0c0"/>
<rect x="696" y="59" width="1" height="1" fill="#c0c0c0"/>
<rect x="681" y="60" width="1" height="1" fill="#c0c0c0"/>
<rect x="683" y="60" width="1" height="1" fill="#c0c0c0"/>
<rect x="685" y="60" width="1" height="1" fill="#c0c0c0"/>
<rect x="687" y="60" width="1" height="1" fill="#c0c0c0"/>
<rect x="689" y="60" width="1" height="1" fill="#c0c0c0"/>
<rect x="691" y="60" width="1" height="1" fill="#c0c0c0"/>
<rect x="693" y="60" width="1" height="1" fill="#c0c0c0"/>
<rect x="695" y="60" width="1" height="1" fill="#c0c0c0"/>
<rect x="682" y="61" width="1" height="1" fill="#c0c0c0"/>
<rect x="684" y="61" width="1" height="1" fill="#c0c0c0"/>
<rect x="686" y="61" width="1" height="1" fill="#c0c0c0"/>
<rect x="688" y="61" width="1" height="1" fill="#c0c0c0"/>
<rect x="690" y="61" width="1" height="1" fill="#c0c0c0"/>
<rect x="692" y="61" width="1" height="1" fill="#c0c0c0"/>
<rect x="694" y="61" width="1" height="1" fill="#c0c0c0"/>
<rect x="696" y="61" width="1" height="1" fill="#c0c0c0"/>
<rect x="681" y="62" width="1" height="1" fill="#c0c0c0"/>
<rect x="683" y="62" width="1" height="1" fill="#c0c0c0"/>
<rect x="685" y="62" width="1" height="1" fill="#c0c0c0"/>
<rect x="687" y="62" width="1" height="1" fill="#c0c0c0"/>
<rect x="689" y="62" width="1" height="1" fill="#c0c0c0"/>
<rect x="691" y="62" width="1" height="1" fill="#c0c0c0"/>
<rect x="693" y="62" width="1" height="1" fill="#c0c0c0"/>
<rect x="695" y="62" width="1" height="1" fill="#c0c0c0"/>
<rect x="682" y="63" width="1" height="1" fill="#c0c0c0"/>
<rect x="684" y="63" width="1" height="1" fill="#c0c0c0"/>
<rect x="686" y="63" width="1" height="1" fill="#c0c0c0"/>
<rect x="688" y="63" width="1" height="1" fill="#c0c0c0"/>
<rect x="690" y="63" width="1" height="1" fill="#c0c0c0"/>
<rect x="692" y="63" width="1" height="1" fill="#c0c0c0"/>
<rect x="694" y="63" width="1" height="1" fill="#c0c0c0"/>
<rect x="696" y="63" width="1" height="1" fill="#c0c0c0"/>
<rect x="681" y="64" width="1" height="1" fill="#c0c0c0"/>
<rect x="683" y="64" width="1" height="1" fill="#c0c0c0"/>
<rect x="685" y="64" width="1" height="1" fill="#c0c0c0"/>
<rect x="687" y="64" width="1" height="1" fill="#c0c0c0"/>
<rect x="689" y="64" width="1" height="1" fill="#c0c0c0"/>
<rect x="691" y="64" width="1" height="1" fill="#c0c0c0"/>
<rect x="693" y="64" width="1" height="1" fill="#c0c0c0"/>
<rect x="695" y="64" width="1" height="1" fill="#c0c0c0"/>
<rect x="682" y="65" width="1" height="1" fill="#c0c0c0"/>
<rect x="684" y="65" width="1" height="1" fill="#c0c0c0"/>
<rect x="686" y="65" width="1" height="1" fill="#c0c0c0"/>
<rect x="688" y="65" width="1" height="1" fill="#c0c0c0"/>
<rect x="690" y="65" width="1" height="1" fill="#c0c0c0"/>
<rect x="692" y="65" width="1" height="1" fill="#c0c0c0"/>
<rect x="694" y="65" width="1" height="1" fill="#c0c0c0"/>
<rect x="696" y="65" width="1" height="1" fill="#c0c0c0"/>
<rect x="681" y="66" width="1" height="1" fill="#c0c0c0"/>
<rect x="683" y="66" width="1" height="1" fill="#c0c0c0"/>
<rect x="685" y="66" width="1" height="1" fill="#c0c0c0"/>
<rect x="687" y="66" width="1" height="1" fill="#c0c0c0"/>
<rect x="689" y="66" width="1" height="1" fill="#c0c0c0"/>
<rect x="691" y="66" width="1" height="1" fill="#c0c0c0"/>
<rect x="693" y="66" width="1" height="1" fill="#c0c0c0"/>
<rect x="695" y="66" width="1" height="1" fill="#c0c0c0"/>
<rect x="682" y="67" width="1" height="1" fill="#c0c0c0"/>
<rect x="684" y="67" width="1" height="1" fill="#c0c0c0"/>
<rect x="686" y="67" width="1" height="1" fill="#c0c0c0"/>
<rect x="688" y="67" width="1" height="1" fill="#c0c0c0"/>
<rect x="690" y="67" width="1" height="1" fill="#c0c0c0"/>
<rect x="692" y="67" width="1" height="1" fill="#c0c0c0"/>
<rect x="694" y="67" width="1" height="1" fill="#c0c0c0"/>
<rect x="696" y="67" width="1" height="1" fill="#c0c0c0"/>
<rect x="681" y="68" width="1" height="1" fill="#c0c0c0"/>
<rect x="683" y="68" width="1" height="1" fill="#c0c0c0"/>
<rect x="685" y="68" width="1" height="1" fill="#c0c0c0"/>
<rect x="687" y="68" width="1" height="1" fill="#c0c0c0"/>
<rect x="689" y="68" width="1" height="1" fill="#c0c0c0"/>
<rect x="691" y="68" width="1" height="1" fill="#c0c0c0"/>
<rect x="693" y="68" width="1" height="1" fill="#c0c0c0"/>
<rect x="695" y="68" width="1" height="1" fill="#c0c0c0"/>
<rect x="682" y="69" width="1" height="1" fill="#c0c0c0"/>
<rect x="684" y="69" width="1" height="1" fill="#c0c0c0"/>
<rect x="686" y="69" width="1" height="1" fill="#c0c0c0"/>
<rect x="688" y="69" width="1" height="1" fill="#c0c0c0"/>
<rect x="690" y="69" width="1" height="1" fill="#c0c0c0"/>
<rect x="692" y="69" width="1" height="1" fill="#c0c0c0"/>
<rect x="694" y="69" width="1" height="1" fill="#c0c0c0"/>
<rect x="696" y="69" width="1" height="1" fill="#c0c0c0"/>
<rect x="681" y="70" width="1" height="1" fill="#c0c0c0"/>
<rect x="683" y="70" width="1" height="1" fill="#c0c0c0"/>
<rect x="685" y="70" width="1" height="1" fill="#c0c0c0"/>
<rect x="687" y="70" width="1" height="1" fill="#c0c0c0"/>
<rect x="689" y="70" width="1" height="1" fill="#c0c0c0"/>
<rect x="691" y="70" width="1" height="1" fill="#c0c0c0"/>
<rect x="693" y="70" width="1" height="1" fill="#c0c0c0"/>
<rect x="695" y="70" width="1" height="1" fill="#c0c0c0"/>
<rect x="682" y="71" width="1" height="1" fill="#c0c0c0"/>
<rect x="684" y="71" width="1" height="1" fill="#c0c0c0"/>
<rect x="686" y="71" width="1" height="1" fill="#c0c0c0"/>
<rect x="688" y="71" width="1" height="1" fill="#c0c0c0"/>
<rect x="690" y="71" width="1" height="1" fill="#c0c0c0"/>
<rect x="692" y="71" width="1" height="1" fill="#c0c0c0"/>
<rect x="694" y="71" width="1" height="1" fill="#c0c0c0"/>
<rect x="696" y="71" width="1" height="1" fill="#c0c0c0"/>
<rect x="686" y="56" width="1" height="1" fill="#008080"/>
<rect x="688" y="56" width="1" height="1" fill="#008080"/>
<rect x="690" y="56" width="1" height="1" fill="#008080"/>
<rect x="692" y="56" width="1" height="1" fill="#008080"/>
<rect x="694" y="56" width="1" height="1" fill="#008080"/>
<rect x="684" y="58" width="1" height="1" fill="#008080"/>
<rect x="684" y="60" width="1" height="1" fill="#008080"/>
<rect x="696" y="58" width="1" height="1" fill="#008080"/>
<rect x="696" y="60" width="1" height="1" fill="#008080"/>
<rect x="696" y="62" width="1" height="1" fill="#008080"/>
<rect x="696" y="64" width="1" height="1" fill="#008080"/>
<rect x="696" y="66" width="1" height="1" fill="#008080"/>
<rect x="696" y="68" width="1" height="1" fill="#008080"/>
<rect x="696" y="70" width="1" height="1" fill="#008080"/>
<rect x="687" y="61" width="1" height="1" fill="#008080"/>
<rect x="689" y="61" width="1" height="1" fill="#008080"/>
<rect x="691" y="71" width="1" height="1" fill="#008080"/>
<rect x="693" y="71" width="1" height="1" fill="#008080"/>
<rect x="695" y="71" width="1" height="1" fill="#008080"/>
<rect x="687" y="59" width="1" height="1" fill="#808000"/>
<rect x="689" y="59" width="1" height="1" fill="#808000"/>
<rect x="691" y="59" width="1" height="1" fill="#808000"/>
<rect x="693" y="59" width="1" height="1" fill="#808000"/>
<rect x="688" y="60" width="1" height="1" fill="#808000"/>
<rect x="690" y="60" width="1" height="1" fill="#808000"/>
<rect x="692" y="60" width="1" height="1" fill="#808000"/>
<rect x="691" y="61" width="1" height="1" fill="#008000"/>
<rect x="693" y="61" width="1" height="1" fill="#008000"/>
<rect x="684" y="64" width="1" height="1" fill="#000000"/>
<rect x="683" y="65" width="1" height="1" fill="#000000"/>
<rect x="682" y="66" width="1" height="1" fill="#000000"/>
<rect x="683" y="67" width="1" height="1" fill="#000000"/>
<rect x="682" y="68" width="1" height="1" fill="#000000"/>
<rect x="684" y="68" width="1" height="1" fill="#000000"/>
<rect x="683" y="69" width="1" height="1" fill="#000000"/>
<rect x="685" y="69" width="1" height="1" fill="#000000"/>
<rect x="686" y="68" width="1" height="1" fill="#000000"/>
<rect x="687" y="69" width="1" height="1" fill="#000000"/>
<rect x="686" y="70" width="1" height="1" fill="#000000"/>
<rect x="688" y="70" width="1" height="1" fill="#000000"/>
<rect x="17" y="84" width="1004" height="1" fill="#ffffff"/>
<rect x="17" y="84" width="1" height="580" fill="#ffffff"/>
<rect x="1020" y="85" width="1" height="579" fill="#000"/>
<rect x="1019" y="85" width="1" height="578" fill="#a0a0a0"/>
<rect x="18" y="663" width="1002" height="1" fill="#a0a0a0"/>
<path d="M 109.5 627.5 L 109.5 307.5 A 178 178 0 0 1 465.5 307.5 L 465.5 627.5 Z" fill="#fff" stroke="#000" stroke-width="1"/>
<path d="M 137.5 307.5 A 150 150 0 0 1 437.5 307.5 Z" fill="#00bfff"/>
<rect x="138" y="310" width="299" height="135" fill="#00bfff"/>
<rect x="138" y="469" width="299" height="130" fill="#00bfff"/>
<path d="M 124.5 307.5 A 163 163 0 0 1 450.5 307.5" fill="none" stroke="#000" stroke-width="1"/>
<path d="M 137.5 307.5 A 150 150 0 0 1 437.5 307.5" fill="none" stroke="#000" stroke-width="1"/>
<rect x="109" y="307" width="29" height="1" fill="#000"/>
<rect x="437" y="307" width="29" height="1" fill="#000"/>
<rect x="124" y="307" width="1" height="306" fill="#000"/>
<rect x="450" y="307" width="1" height="306" fill="#000"/>
<rect x="137" y="307" width="1" height="139" fill="#000"/>
<rect x="437" y="307" width="1" height="139" fill="#000"/>
<rect x="137" y="468" width="1" height="132" fill="#000"/>
<rect x="437" y="468" width="1" height="132" fill="#000"/>
<rect x="124" y="612" width="327" height="1" fill="#000"/>
<rect x="137" y="599" width="301" height="1" fill="#000"/>
<line x1="109.5" y1="627.5" x2="124.5" y2="612.5" stroke="#000" stroke-width="1" />
<line x1="124.5" y1="612.5" x2="137.5" y2="599.5" stroke="#000" stroke-width="1" />
<line x1="465.5" y1="627.5" x2="450.5" y2="612.5" stroke="#000" stroke-width="1" />
<line x1="450.5" y1="612.5" x2="437.5" y2="599.5" stroke="#000" stroke-width="1" />
<rect x="137" y="445" width="301" height="1" fill="#000"/>
<line x1="137.5" y1="445.5" x2="124.5" y2="458.5" stroke="#000" stroke-width="1" />
<line x1="437.5" y1="445.5" x2="450.5" y2="458.5" stroke="#000" stroke-width="1" />
<rect x="124" y="463" width="327" height="1" fill="#000"/>
<line x1="132.5" y1="463.5" x2="137.5" y2="468.5" stroke="#000" stroke-width="1" />
<line x1="442.5" y1="463.5" x2="437.5" y2="468.5" stroke="#000" stroke-width="1" />
<rect x="137" y="468" width="301" height="1" fill="#000"/>
<path d="M 327.24 270.87 L 395.83 202.28 L 392.72 199.17 L 324.13 267.76 Z" fill="#fff" stroke="#000" stroke-width="1"/>
<path d="M 250.87 267.76 L 182.28 199.17 L 179.17 202.28 L 247.76 270.87 Z" fill="#fff" stroke="#000" stroke-width="1"/>
<rect x="285.5" y="157.5" width="4" height="96" fill="#fff" stroke="#000" stroke-width="1"/>
<path d="M 231.5 307.5 A 56 56 0 0 1 343.5 307.5 L 338.5 307.5 A 51 51 0 0 0 236.5 307.5 Z" fill="#fff" stroke="#000" stroke-width="1"/>
<path d="M 237.0 307.5 A 50.5 50.5 0 0 1 338.0 307.5 Z" fill="#00bfff"/>
<rect x="137" y="305" width="301" height="5" fill="#000"/>
<rect x="138" y="306" width="299" height="3" fill="#fff"/>
<rect x="137" y="381" width="95" height="5" fill="#000"/>
<rect x="138" y="382" width="93" height="3" fill="#fff"/>
<rect x="236" y="381" width="103" height="5" fill="#000"/>
<rect x="237" y="382" width="101" height="3" fill="#fff"/>
<rect x="343" y="381" width="95" height="5" fill="#000"/>
<rect x="344" y="382" width="93" height="3" fill="#fff"/>
<rect x="137" y="533" width="95" height="5" fill="#000"/>
<rect x="138" y="534" width="93" height="3" fill="#fff"/>
<rect x="236" y="533" width="103" height="5" fill="#000"/>
<rect x="237" y="534" width="101" height="3" fill="#fff"/>
<rect x="343" y="533" width="95" height="5" fill="#000"/>
<rect x="344" y="534" width="93" height="3" fill="#fff"/>
<rect x="231" y="307" width="6" height="139" fill="#000"/>
<rect x="232" y="308" width="4" height="137" fill="#fff"/>
<rect x="338" y="307" width="6" height="139" fill="#000"/>
<rect x="339" y="308" width="4" height="137" fill="#fff"/>
<rect x="231" y="468" width="6" height="132" fill="#000"/>
<rect x="232" y="469" width="4" height="130" fill="#fff"/>
<rect x="338" y="468" width="6" height="132" fill="#000"/>
<rect x="339" y="469" width="4" height="130" fill="#fff"/>
<rect x="232" y="305" width="4" height="1" fill="#fff"/>
<rect x="232" y="309" width="4" height="1" fill="#fff"/>
<rect x="339" y="305" width="4" height="1" fill="#fff"/>
<rect x="339" y="309" width="4" height="1" fill="#fff"/>
<text x="271.5" y="299" font-size="11" fill="#000" text-anchor="start" font-weight="normal" xml:space="preserve" style="white-space:pre" textLength="32" lengthAdjust="spacingAndGlyphs">SL.FIX</text>
<rect x="287" y="491" width="1" height="85" fill="#000"/>
<line x1="287.5" y1="491.5" x2="266.5" y2="503.5" stroke="#000" stroke-width="1" />
<line x1="287.5" y1="491.5" x2="308.5" y2="503.5" stroke="#000" stroke-width="1" />
<rect x="286" y="522" width="1" height="1" fill="#000"/>
<rect x="288" y="522" width="1" height="1" fill="#000"/>
<rect x="285" y="523" width="1" height="1" fill="#000"/>
<rect x="289" y="523" width="1" height="1" fill="#000"/>
<rect x="109" y="114" width="164" height="1" fill="#505050"/>
<rect x="302" y="114" width="164" height="1" fill="#505050"/>
<rect x="109" y="107" width="1" height="15" fill="#505050"/>
<rect x="465" y="107" width="1" height="15" fill="#505050"/>
<rect x="110" y="113" width="1" height="3" fill="#505050"/>
<rect x="111" y="111" width="1" height="1" fill="#505050"/>
<rect x="111" y="117" width="1" height="1" fill="#505050"/>
<rect x="464" y="113" width="1" height="3" fill="#505050"/>
<rect x="463" y="111" width="1" height="1" fill="#505050"/>
<rect x="463" y="117" width="1" height="1" fill="#505050"/>
<text x="275.5" y="119" font-size="11" fill="#505050" text-anchor="start" font-weight="normal" xml:space="preserve" style="white-space:pre" textLength="23.5" lengthAdjust="spacingAndGlyphs">1250</text>
<rect x="87" y="131" width="1" height="155" fill="#ff0000"/>
<rect x="87" y="299" width="1" height="237" fill="#ff0000"/>
<rect x="87" y="548" width="1" height="80" fill="#ff0000"/>
<rect x="89" y="129" width="6" height="1" fill="#ff0000"/>
<rect x="85" y="131" width="1" height="1" fill="#ff0000"/>
<rect x="90" y="131" width="1" height="1" fill="#ff0000"/>
<rect x="82" y="456" width="13" height="1" fill="#ff0000"/>
<rect x="86" y="455" width="3" height="3" fill="#ff0000"/>
<rect x="85" y="454" width="1" height="1" fill="#ff0000"/>
<rect x="89" y="454" width="2" height="1" fill="#ff0000"/>
<rect x="85" y="458" width="1" height="2" fill="#ff0000"/>
<rect x="89" y="458" width="1" height="1" fill="#ff0000"/>
<rect x="90" y="459" width="1" height="1" fill="#ff0000"/>
<rect x="82" y="627" width="13" height="1" fill="#ff0000"/>
<rect x="86" y="626" width="3" height="1" fill="#ff0000"/>
<rect x="85" y="625" width="1" height="1" fill="#ff0000"/>
<rect x="89" y="625" width="2" height="1" fill="#ff0000"/>
<text x="76.5" y="297" font-size="11" fill="#800080" text-anchor="start" font-weight="normal" xml:space="preserve" style="white-space:pre" textLength="23.5" lengthAdjust="spacingAndGlyphs">1150</text>
<text x="79.5" y="546" font-size="11" fill="#000" text-anchor="start" font-weight="normal" xml:space="preserve" style="white-space:pre" textLength="18" lengthAdjust="spacingAndGlyphs">600</text>
<text x="239" y="648" font-size="11" fill="#0000ff" text-anchor="start" font-weight="normal" xml:space="preserve" style="white-space:pre" textLength="97.5" lengthAdjust="spacingAndGlyphs">Viewed from Outside</text>
<rect x="35" y="101" width="7" height="1" fill="#0000ff"/>
<rect x="35" y="128" width="7" height="1" fill="#0000ff"/>
<rect x="38" y="102" width="1" height="26" fill="#ff0000"/>
<rect x="37" y="103" width="3" height="1" fill="#ff0000"/>
<rect x="36" y="104" width="5" height="1" fill="#ff0000"/>
<rect x="37" y="125" width="3" height="1" fill="#ff0000"/>
<rect x="36" y="124" width="5" height="1" fill="#ff0000"/>
<path d="M47 101 H69 V107 H53 V119 H69 V125 H47 Z" fill="#fff"/>
<rect x="47" y="101" width="23" height="1" fill="#000"/>
<rect x="47" y="101" width="1" height="25" fill="#000"/>
<rect x="53" y="107" width="17" height="1" fill="#000"/>
<rect x="53" y="107" width="1" height="13" fill="#000"/>
<rect x="53" y="119" width="17" height="1" fill="#000"/>
<rect x="44" y="126" width="25" height="2" fill="#fff"/>
<rect x="44" y="125" width="26" height="1" fill="#000"/>
<rect x="44" y="128" width="26" height="1" fill="#000"/>
<rect x="69" y="114" width="20" height="17" fill="#000"/>
<rect x="71" y="116" width="16" height="13" fill="#f8f8f8"/>
<rect x="71" y="127" width="16" height="2" fill="#808080"/>
<rect x="85" y="116" width="2" height="13" fill="#a0a0a0"/>
<path d="M73 120 H85 L79 126 Z" fill="#000"/>
<rect x="17" y="664" width="1004" height="1" fill="#000"/>
<path d="M 218.5 664.5 L 225.5 684.5 L 260.5 684.5 L 266.5 664.5" fill="#fff" stroke="#000" stroke-width="1"/>
<path d="M 172.5 664.5 L 179.5 684.5 L 218.5 684.5 L 224.5 664.5" fill="#fff" stroke="#000" stroke-width="1"/>
<path d="M 124.5 664.5 L 131.5 684.5 L 171.5 684.5 L 178.5 664.5" fill="#fff" stroke="#000" stroke-width="1"/>
<path d="M 25.5 664.5 L 32.5 684.5 L 75.5 684.5 L 82.5 664.5" fill="#fff" stroke="#000" stroke-width="1"/>
<path d="M 76.5 664.5 L 83.5 684.5 L 123.5 684.5 L 129.5 664.5" fill="#f0f0f0" stroke="#000" stroke-width="1"/>
<rect x="77" y="663" width="52" height="1.5" fill="#f0f0f0"/>
<text x="34.5" y="678" font-size="11" fill="#000" text-anchor="start" font-weight="normal" xml:space="preserve" style="white-space:pre" textLength="39.5" lengthAdjust="spacingAndGlyphs">Situation</text>
<text x="85.5" y="679" font-size="11" fill="#000" text-anchor="start" font-weight="normal" xml:space="preserve" style="white-space:pre" textLength="36.5" lengthAdjust="spacingAndGlyphs">Solution</text>
<text x="133.5" y="678" font-size="11" fill="#000" text-anchor="start" font-weight="normal" xml:space="preserve" style="white-space:pre" textLength="37" lengthAdjust="spacingAndGlyphs">B. O. M.</text>
<text x="181.5" y="678" font-size="11" fill="#000" text-anchor="start" font-weight="normal" xml:space="preserve" style="white-space:pre" textLength="34" lengthAdjust="spacingAndGlyphs">Costing</text>
<text x="227.5" y="678" font-size="11" fill="#000" text-anchor="start" font-weight="normal" xml:space="preserve" style="white-space:pre" textLength="31" lengthAdjust="spacingAndGlyphs">Pricing</text>
<rect x="17" y="697" width="80" height="23" fill="#696969"/>
<rect x="17" y="697" width="79" height="22" fill="#fff"/>
<rect x="18" y="698" width="78" height="21" fill="#a0a0a0"/>
<rect x="18" y="698" width="77" height="20" fill="#f0f0f0"/>
<rect x="113" y="697" width="80" height="23" fill="#696969"/>
<rect x="113" y="697" width="79" height="22" fill="#fff"/>
<rect x="114" y="698" width="78" height="21" fill="#a0a0a0"/>
<rect x="114" y="698" width="77" height="20" fill="#f0f0f0"/>
<text x="50" y="712" font-size="12" fill="#000" text-anchor="start" font-weight="normal" xml:space="preserve" style="white-space:pre" textLength="14.5" lengthAdjust="spacingAndGlyphs">OK</text>
<rect x="57" y="713" width="8" height="1" fill="#000"/>
<text x="136.5" y="712" font-size="12" fill="#000" text-anchor="start" font-weight="normal" xml:space="preserve" style="white-space:pre" textLength="32.5" lengthAdjust="spacingAndGlyphs">Cancel</text>
</svg>
</body></html>
